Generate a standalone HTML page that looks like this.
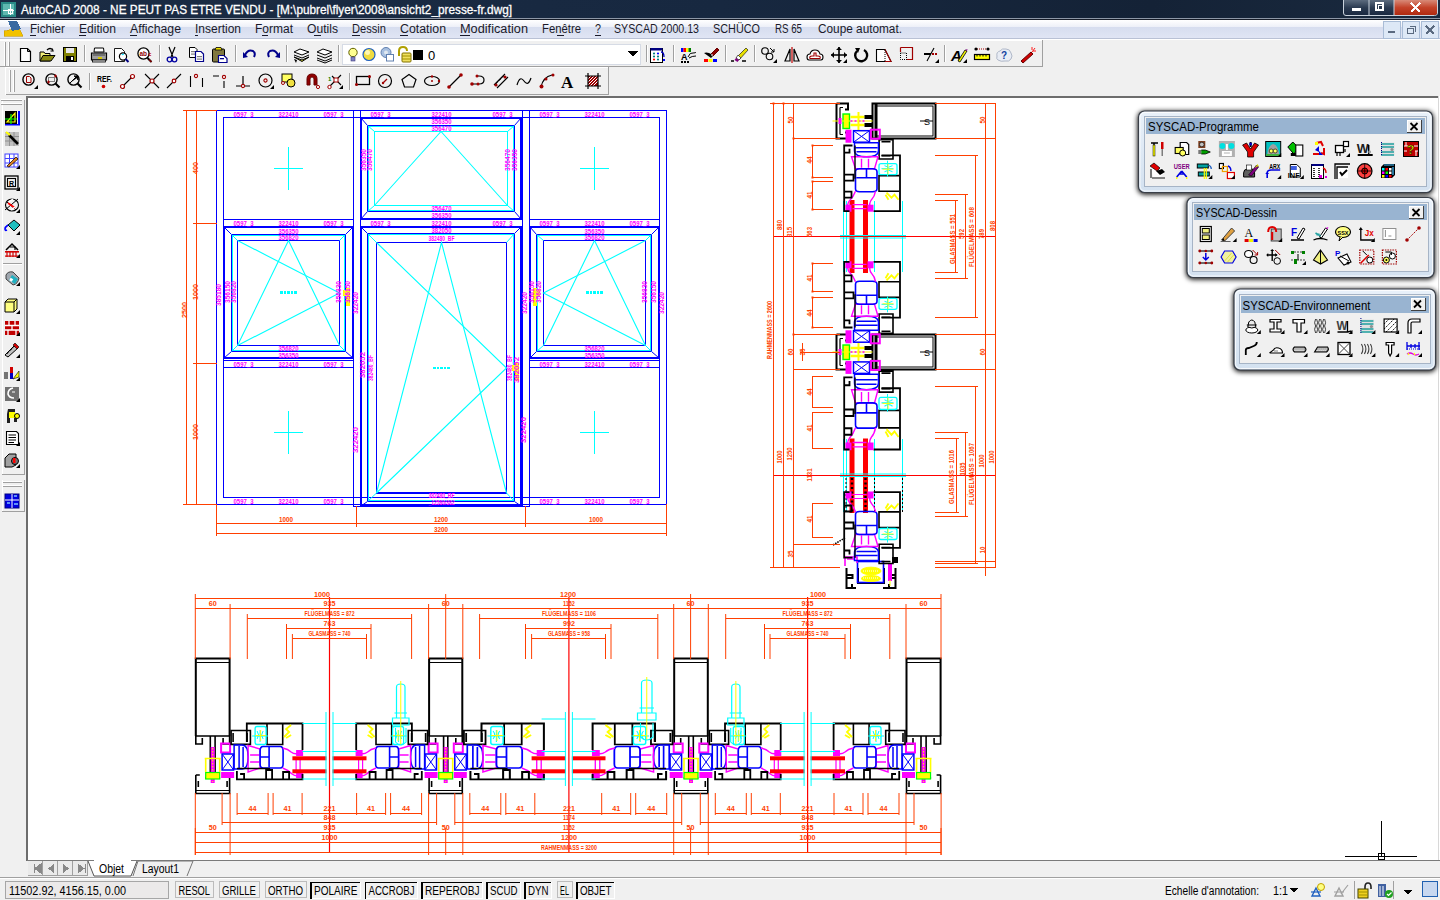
<!DOCTYPE html><html><head><meta charset="utf-8"><style>html,body{margin:0;padding:0;width:1440px;height:900px;overflow:hidden;background:#f0f0f0}svg{position:absolute;left:0;top:0;display:block}text{font-family:"Liberation Sans",sans-serif}</style></head><body>
<svg width="1440" height="900" viewBox="0 0 1440 900" shape-rendering="crispEdges">
<defs>
<linearGradient id="tb" x1="0" y1="0" x2="1" y2="0"><stop offset="0" stop-color="#1b2c44"/><stop offset="0.5" stop-color="#172840"/><stop offset="0.8" stop-color="#142236"/><stop offset="1" stop-color="#1a2a3f"/></linearGradient>
<linearGradient id="mb" x1="0" y1="0" x2="0" y2="1"><stop offset="0" stop-color="#ffffff"/><stop offset="0.38" stop-color="#edf0f8"/><stop offset="0.39" stop-color="#d6ddef"/><stop offset="1" stop-color="#e0e5f4"/></linearGradient>
<linearGradient id="cls" x1="0" y1="0" x2="0" y2="1"><stop offset="0" stop-color="#d88a78"/><stop offset="0.5" stop-color="#c4432a"/><stop offset="1" stop-color="#b02a10"/></linearGradient>
<linearGradient id="tbtn" x1="0" y1="0" x2="0" y2="1"><stop offset="0" stop-color="#5c6b7e"/><stop offset="0.5" stop-color="#2a3a50"/><stop offset="1" stop-color="#1a2840"/></linearGradient>
</defs>
<rect x="0" y="0" width="1440" height="18" fill="url(#tb)" stroke="none" stroke-width="1" />
<line x1="0" y1="18.5" x2="1440" y2="18.5" stroke="#8d97a6" stroke-width="1" />
<line x1="0" y1="19.5" x2="1440" y2="19.5" stroke="#161c28" stroke-width="1" />
<rect x="1" y="2" width="15" height="15" fill="#2a8a86" stroke="none" stroke-width="1" />
<rect x="3" y="4" width="11" height="11" fill="#5fb8b0" stroke="none" stroke-width="1" />
<line x1="3" y1="10" x2="14" y2="10" stroke="#fff" stroke-width="1" />
<line x1="10" y1="4" x2="10" y2="15" stroke="#fff" stroke-width="1" />
<rect x="8" y="9" width="4" height="4" fill="none" stroke="#fff" stroke-width="1" />
<text x="21" y="14" font-size="13" fill="#fff" textLength="491" lengthAdjust="spacingAndGlyphs" stroke="#fff" stroke-width="0.3">AutoCAD 2008 - NE PEUT PAS ETRE VENDU - [M:\pubrel\flyer\2008\ansicht2_presse-fr.dwg]</text>
<g shape-rendering="geometricPrecision">
<path d="M1343.5,0 V13 Q1343.5,15.5 1346,15.5 H1434.5 Q1437.5,15.5 1437.5,13 V0" fill="url(#tbtn)" stroke="#c9d2dc" stroke-width="1"/>
<path d="M1394,0 V15 H1434.5 Q1437,15 1437,12.5 V0 Z" fill="url(#cls)"/>
<line x1="1369" y1="0" x2="1369" y2="15" stroke="#c9d2dc" stroke-width="1" />
<line x1="1394" y1="0" x2="1394" y2="15" stroke="#c9d2dc" stroke-width="1" />
</g>
<rect x="1352" y="8" width="9" height="3" fill="#fff" stroke="none" stroke-width="1" />
<rect x="1376" y="3" width="7" height="7" fill="none" stroke="#fff" stroke-width="1.5" />
<rect x="1378" y="5.5" width="4" height="4" fill="#2a3a50" stroke="#fff" stroke-width="1" />
<path d="M1411,3 L1420,12 M1420,3 L1411,12" stroke="#fff" stroke-width="2.6"/>
<rect x="0" y="20" width="1440" height="18" fill="url(#mb)" stroke="none" stroke-width="1" />
<line x1="0" y1="38.5" x2="1440" y2="38.5" stroke="#b9c1d5" stroke-width="1" />
<line x1="0" y1="39.5" x2="1440" y2="39.5" stroke="#ffffff" stroke-width="1" />
<path d="M4,31 L4,36 L23,36 L19,28 Z" fill="#f2c200" stroke="#c89a00" stroke-width="0.6"/><path d="M8,21 L17,21 L21,29 L12,31 Z" fill="#3a6aa0"/>
<text x="30" y="33" font-size="12.5" fill="#1a1a2a" textLength="35" lengthAdjust="spacingAndGlyphs" >Fichier</text>
<text x="79" y="33" font-size="12.5" fill="#1a1a2a" textLength="37" lengthAdjust="spacingAndGlyphs" >Edition</text>
<text x="130" y="33" font-size="12.5" fill="#1a1a2a" textLength="51" lengthAdjust="spacingAndGlyphs" >Affichage</text>
<text x="195" y="33" font-size="12.5" fill="#1a1a2a" textLength="46" lengthAdjust="spacingAndGlyphs" >Insertion</text>
<text x="255" y="33" font-size="12.5" fill="#1a1a2a" textLength="38" lengthAdjust="spacingAndGlyphs" >Format</text>
<text x="307" y="33" font-size="12.5" fill="#1a1a2a" textLength="31" lengthAdjust="spacingAndGlyphs" >Outils</text>
<text x="352" y="33" font-size="12.5" fill="#1a1a2a" textLength="34" lengthAdjust="spacingAndGlyphs" >Dessin</text>
<text x="400" y="33" font-size="12.5" fill="#1a1a2a" textLength="46" lengthAdjust="spacingAndGlyphs" >Cotation</text>
<text x="460" y="33" font-size="12.5" fill="#1a1a2a" textLength="68" lengthAdjust="spacingAndGlyphs" >Modification</text>
<text x="542" y="33" font-size="12.5" fill="#1a1a2a" textLength="39" lengthAdjust="spacingAndGlyphs" >Fenêtre</text>
<text x="595" y="33" font-size="12.5" fill="#1a1a2a" textLength="6" lengthAdjust="spacingAndGlyphs" >?</text>
<text x="614" y="33" font-size="12.5" fill="#1a1a2a" textLength="85" lengthAdjust="spacingAndGlyphs" >SYSCAD 2000.13</text>
<text x="713" y="33" font-size="12.5" fill="#1a1a2a" textLength="47" lengthAdjust="spacingAndGlyphs" >SCHÜCO</text>
<text x="775" y="33" font-size="12.5" fill="#1a1a2a" textLength="27" lengthAdjust="spacingAndGlyphs" >RS 65</text>
<text x="818" y="33" font-size="12.5" fill="#1a1a2a" textLength="84" lengthAdjust="spacingAndGlyphs" >Coupe automat.</text>
<line x1="30" y1="35.5" x2="36" y2="35.5" stroke="#1a1a2a" stroke-width="1" />
<line x1="79" y1="35.5" x2="86" y2="35.5" stroke="#1a1a2a" stroke-width="1" />
<line x1="130" y1="35.5" x2="137" y2="35.5" stroke="#1a1a2a" stroke-width="1" />
<line x1="195" y1="35.5" x2="198" y2="35.5" stroke="#1a1a2a" stroke-width="1" />
<line x1="262" y1="35.5" x2="268" y2="35.5" stroke="#1a1a2a" stroke-width="1" />
<line x1="314" y1="35.5" x2="321" y2="35.5" stroke="#1a1a2a" stroke-width="1" />
<line x1="352" y1="35.5" x2="360" y2="35.5" stroke="#1a1a2a" stroke-width="1" />
<line x1="400" y1="35.5" x2="408" y2="35.5" stroke="#1a1a2a" stroke-width="1" />
<line x1="460" y1="35.5" x2="470" y2="35.5" stroke="#1a1a2a" stroke-width="1" />
<line x1="557" y1="35.5" x2="564" y2="35.5" stroke="#1a1a2a" stroke-width="1" />
<line x1="595" y1="35.5" x2="601" y2="35.5" stroke="#1a1a2a" stroke-width="1" />
<rect x="1383.5" y="21.5" width="17" height="17" fill="#dde8f6" stroke="#a9bcd6" stroke-width="1" />
<rect x="1402.5" y="21.5" width="17" height="17" fill="#dde8f6" stroke="#a9bcd6" stroke-width="1" />
<rect x="1421.5" y="21.5" width="17" height="17" fill="#dde8f6" stroke="#a9bcd6" stroke-width="1" />
<rect x="1388" y="31" width="7" height="2" fill="#5a6a80" stroke="none" stroke-width="1" />
<path d="M1407.5,28.5 h6 v5 h-6 z M1409.5,26.5 h6 v5" fill="none" stroke="#5a6a80" stroke-width="1.4"/>
<path d="M1426,26 L1434,34 M1434,26 L1426,34" stroke="#5a6a80" stroke-width="2"/>
<rect x="0" y="40" width="1440" height="57" fill="#f0f0f0" stroke="none" stroke-width="1" />
<rect x="0.5" y="40.5" width="1042" height="25" fill="#f0f0f0" stroke="none" stroke-width="1" />
<line x1="0" y1="40.5" x2="1043" y2="40.5" stroke="#ffffff" stroke-width="1" />
<line x1="1042.5" y1="40" x2="1042.5" y2="67" stroke="#a0a0a0" stroke-width="1" />
<line x1="0" y1="66.5" x2="1043" y2="66.5" stroke="#a0a0a0" stroke-width="1" />
<line x1="4.5" y1="42" x2="4.5" y2="66" stroke="#ffffff" stroke-width="1" />
<line x1="5.5" y1="42" x2="5.5" y2="66" stroke="#a0a0a0" stroke-width="1" />
<line x1="8.5" y1="42" x2="8.5" y2="66" stroke="#ffffff" stroke-width="1" />
<line x1="9.5" y1="42" x2="9.5" y2="66" stroke="#a0a0a0" stroke-width="1" />
<line x1="5" y1="67.5" x2="608" y2="67.5" stroke="#ffffff" stroke-width="1" />
<line x1="608.5" y1="67" x2="608.5" y2="95" stroke="#a0a0a0" stroke-width="1" />
<line x1="5" y1="94.5" x2="609" y2="94.5" stroke="#a0a0a0" stroke-width="1" />
<line x1="5.5" y1="67" x2="5.5" y2="95" stroke="#ffffff" stroke-width="1" />
<line x1="9.5" y1="70" x2="9.5" y2="92" stroke="#ffffff" stroke-width="1" />
<line x1="10.5" y1="70" x2="10.5" y2="92" stroke="#a0a0a0" stroke-width="1" />
<line x1="13.5" y1="70" x2="13.5" y2="92" stroke="#ffffff" stroke-width="1" />
<line x1="14.5" y1="70" x2="14.5" y2="92" stroke="#a0a0a0" stroke-width="1" />
<line x1="84.5" y1="45" x2="84.5" y2="62" stroke="#a0a0a0" stroke-width="1" />
<line x1="85.5" y1="45" x2="85.5" y2="62" stroke="#ffffff" stroke-width="1" />
<line x1="159.5" y1="45" x2="159.5" y2="62" stroke="#a0a0a0" stroke-width="1" />
<line x1="160.5" y1="45" x2="160.5" y2="62" stroke="#ffffff" stroke-width="1" />
<line x1="235.5" y1="45" x2="235.5" y2="62" stroke="#a0a0a0" stroke-width="1" />
<line x1="236.5" y1="45" x2="236.5" y2="62" stroke="#ffffff" stroke-width="1" />
<line x1="286.5" y1="45" x2="286.5" y2="62" stroke="#a0a0a0" stroke-width="1" />
<line x1="287.5" y1="45" x2="287.5" y2="62" stroke="#ffffff" stroke-width="1" />
<line x1="338.5" y1="45" x2="338.5" y2="62" stroke="#a0a0a0" stroke-width="1" />
<line x1="339.5" y1="45" x2="339.5" y2="62" stroke="#ffffff" stroke-width="1" />
<line x1="646.5" y1="45" x2="646.5" y2="62" stroke="#a0a0a0" stroke-width="1" />
<line x1="647.5" y1="45" x2="647.5" y2="62" stroke="#ffffff" stroke-width="1" />
<line x1="673.5" y1="45" x2="673.5" y2="62" stroke="#a0a0a0" stroke-width="1" />
<line x1="674.5" y1="45" x2="674.5" y2="62" stroke="#ffffff" stroke-width="1" />
<line x1="725.5" y1="45" x2="725.5" y2="62" stroke="#a0a0a0" stroke-width="1" />
<line x1="726.5" y1="45" x2="726.5" y2="62" stroke="#ffffff" stroke-width="1" />
<line x1="754.5" y1="45" x2="754.5" y2="62" stroke="#a0a0a0" stroke-width="1" />
<line x1="755.5" y1="45" x2="755.5" y2="62" stroke="#ffffff" stroke-width="1" />
<line x1="944.5" y1="45" x2="944.5" y2="62" stroke="#a0a0a0" stroke-width="1" />
<line x1="945.5" y1="45" x2="945.5" y2="62" stroke="#ffffff" stroke-width="1" />
<line x1="89.5" y1="73" x2="89.5" y2="90" stroke="#a0a0a0" stroke-width="1" />
<line x1="90.5" y1="73" x2="90.5" y2="90" stroke="#ffffff" stroke-width="1" />
<line x1="349.5" y1="73" x2="349.5" y2="90" stroke="#a0a0a0" stroke-width="1" />
<line x1="350.5" y1="73" x2="350.5" y2="90" stroke="#ffffff" stroke-width="1" />
<rect x="342.5" y="44.5" width="298" height="20" fill="#ffffff" stroke="#d6dbe5" stroke-width="1" />
<path d="M628,51 h10 l-5,6 z" fill="#000"/>
<text x="428" y="60" font-size="13" fill="#000" >0</text>
<rect x="0" y="97" width="27" height="763" fill="#f0f0f0" stroke="none" stroke-width="1" />
<line x1="2.5" y1="100" x2="2.5" y2="475" stroke="#ffffff" stroke-width="1" />
<line x1="24.5" y1="100" x2="24.5" y2="475" stroke="#a0a0a0" stroke-width="1" />
<line x1="2" y1="474.5" x2="25" y2="474.5" stroke="#a0a0a0" stroke-width="1" />
<line x1="1" y1="99.5" x2="22" y2="99.5" stroke="#ffffff" stroke-width="1" />
<line x1="1" y1="100.5" x2="22" y2="100.5" stroke="#a0a0a0" stroke-width="1" />
<line x1="1" y1="103.5" x2="22" y2="103.5" stroke="#ffffff" stroke-width="1" />
<line x1="1" y1="104.5" x2="22" y2="104.5" stroke="#a0a0a0" stroke-width="1" />
<line x1="3" y1="263.5" x2="22" y2="263.5" stroke="#a0a0a0" stroke-width="1" />
<line x1="3" y1="264.5" x2="22" y2="264.5" stroke="#ffffff" stroke-width="1" />
<line x1="2.5" y1="480" x2="2.5" y2="512" stroke="#ffffff" stroke-width="1" />
<line x1="24.5" y1="480" x2="24.5" y2="512" stroke="#a0a0a0" stroke-width="1" />
<line x1="2" y1="511.5" x2="25" y2="511.5" stroke="#a0a0a0" stroke-width="1" />
<line x1="3" y1="481.5" x2="22" y2="481.5" stroke="#ffffff" stroke-width="1" />
<line x1="3" y1="482.5" x2="22" y2="482.5" stroke="#a0a0a0" stroke-width="1" />
<line x1="3" y1="485.5" x2="22" y2="485.5" stroke="#ffffff" stroke-width="1" />
<line x1="3" y1="486.5" x2="22" y2="486.5" stroke="#a0a0a0" stroke-width="1" />
<rect x="26" y="96" width="1414" height="765" fill="#ffffff" stroke="none" stroke-width="1" />
<rect x="26" y="96" width="1412" height="2" fill="#6d6d6d" stroke="none" stroke-width="1" />
<rect x="26" y="96" width="2" height="765" fill="#6d6d6d" stroke="none" stroke-width="1" />
<line x1="1438.5" y1="96" x2="1438.5" y2="861" stroke="#d8d8d8" stroke-width="1" />
<rect x="27" y="860" width="1413" height="18" fill="#f0f0f0" stroke="none" stroke-width="1" />
<line x1="27" y1="860.5" x2="1440" y2="860.5" stroke="#7a7a7a" stroke-width="1" />
<line x1="0" y1="877.5" x2="1440" y2="877.5" stroke="#a0a0a0" stroke-width="1" />
<line x1="0" y1="878.5" x2="1440" y2="878.5" stroke="#ffffff" stroke-width="1" />
<rect x="28" y="861" width="14" height="14" fill="#eaeaea" stroke="none" stroke-width="1" />
<line x1="42.5" y1="861" x2="42.5" y2="875" stroke="#a0a0a0" stroke-width="1" />
<rect x="43" y="861" width="14" height="14" fill="#eaeaea" stroke="none" stroke-width="1" />
<line x1="57.5" y1="861" x2="57.5" y2="875" stroke="#a0a0a0" stroke-width="1" />
<rect x="58" y="861" width="14" height="14" fill="#eaeaea" stroke="none" stroke-width="1" />
<line x1="72.5" y1="861" x2="72.5" y2="875" stroke="#a0a0a0" stroke-width="1" />
<rect x="73" y="861" width="14" height="14" fill="#eaeaea" stroke="none" stroke-width="1" />
<line x1="87.5" y1="861" x2="87.5" y2="875" stroke="#a0a0a0" stroke-width="1" />
<line x1="28" y1="875.5" x2="88" y2="875.5" stroke="#a0a0a0" stroke-width="1" />
<path d="M34,864 v9 M41,864 v9 l-6,-4.5 z" stroke="#888" fill="#888"/>
<path d="M54,864 v9 l-6,-4.5 z" fill="#888"/><path d="M63,864 v9 l6,-4.5 z" fill="#888"/>
<path d="M78,864 v9 l6,-4.5 z M85.5,864 v9" stroke="#888" fill="#888"/>
<g shape-rendering="geometricPrecision">
<path d="M88,861 L94,876 L131,876 L137,861" fill="#ffffff" stroke="#555" stroke-width="1"/>
<path d="M133,876 L138,861 L193,861 L187,876" fill="#f0f0f0" stroke="#777" stroke-width="1"/>
</g>
<rect x="94" y="860" width="37" height="2" fill="#ffffff" stroke="none" stroke-width="1" />
<text x="99" y="873" font-size="12" fill="#000" textLength="25" lengthAdjust="spacingAndGlyphs" >Objet</text>
<text x="142" y="873" font-size="12" fill="#000" textLength="37" lengthAdjust="spacingAndGlyphs" >Layout1</text>
<rect x="0" y="879" width="1440" height="21" fill="#f0f0f0" stroke="none" stroke-width="1" />
<rect x="5.5" y="881.5" width="163" height="17" fill="#ebe9e9" stroke="#a6a6a6" stroke-width="1" />
<text x="9" y="895" font-size="12" fill="#000" textLength="117" lengthAdjust="spacingAndGlyphs" >11502.92, 4156.15, 0.00</text>
<rect x="175.5" y="881.5" width="37.5" height="16" fill="#f0f0f0" stroke="#bcbcbc" stroke-width="1" />
<text x="178.5" y="894.5" font-size="12" fill="#000" textLength="31.5" lengthAdjust="spacingAndGlyphs" >RESOL</text>
<rect x="219.0" y="881.5" width="40.0" height="16" fill="#f0f0f0" stroke="#bcbcbc" stroke-width="1" />
<text x="222.0" y="894.5" font-size="12" fill="#000" textLength="34.0" lengthAdjust="spacingAndGlyphs" >GRILLE</text>
<rect x="265.0" y="881.5" width="41.0" height="16" fill="#f0f0f0" stroke="#bcbcbc" stroke-width="1" />
<text x="268.0" y="894.5" font-size="12" fill="#000" textLength="35.0" lengthAdjust="spacingAndGlyphs" >ORTHO</text>
<rect x="310.5" y="881.5" width="50.5" height="17" fill="#f0f0f0" stroke="none" stroke-width="1" />
<path d="M311.0,899 V882.5 H361" fill="none" stroke="#000" stroke-width="1.2"/>
<path d="M311.5,898.5 H360.5 V882" fill="none" stroke="#ffffff" stroke-width="1"/>
<text x="314.0" y="894.5" font-size="12" fill="#000" textLength="43.5" lengthAdjust="spacingAndGlyphs" >POLAIRE</text>
<rect x="365" y="881.5" width="53" height="17" fill="#f0f0f0" stroke="none" stroke-width="1" />
<path d="M365.5,899 V882.5 H418" fill="none" stroke="#000" stroke-width="1.2"/>
<path d="M366,898.5 H417.5 V882" fill="none" stroke="#ffffff" stroke-width="1"/>
<text x="368.5" y="894.5" font-size="12" fill="#000" textLength="46" lengthAdjust="spacingAndGlyphs" >ACCROBJ</text>
<rect x="421.5" y="881.5" width="61.5" height="17" fill="#f0f0f0" stroke="none" stroke-width="1" />
<path d="M422.0,899 V882.5 H483" fill="none" stroke="#000" stroke-width="1.2"/>
<path d="M422.5,898.5 H482.5 V882" fill="none" stroke="#ffffff" stroke-width="1"/>
<text x="425.0" y="894.5" font-size="12" fill="#000" textLength="54.5" lengthAdjust="spacingAndGlyphs" >REPEROBJ</text>
<rect x="486.5" y="881.5" width="34.5" height="17" fill="#f0f0f0" stroke="none" stroke-width="1" />
<path d="M487.0,899 V882.5 H521" fill="none" stroke="#000" stroke-width="1.2"/>
<path d="M487.5,898.5 H520.5 V882" fill="none" stroke="#ffffff" stroke-width="1"/>
<text x="490.0" y="894.5" font-size="12" fill="#000" textLength="27.5" lengthAdjust="spacingAndGlyphs" >SCUD</text>
<rect x="524.5" y="881.5" width="27.5" height="17" fill="#f0f0f0" stroke="none" stroke-width="1" />
<path d="M525.0,899 V882.5 H552" fill="none" stroke="#000" stroke-width="1.2"/>
<path d="M525.5,898.5 H551.5 V882" fill="none" stroke="#ffffff" stroke-width="1"/>
<text x="528.0" y="894.5" font-size="12" fill="#000" textLength="20.5" lengthAdjust="spacingAndGlyphs" >DYN</text>
<rect x="557.0" y="881.5" width="15.0" height="16" fill="#f0f0f0" stroke="#bcbcbc" stroke-width="1" />
<text x="560.0" y="894.5" font-size="12" fill="#000" textLength="9.0" lengthAdjust="spacingAndGlyphs" >EL</text>
<rect x="576.5" y="881.5" width="38.5" height="17" fill="#f0f0f0" stroke="none" stroke-width="1" />
<path d="M577.0,899 V882.5 H615" fill="none" stroke="#000" stroke-width="1.2"/>
<path d="M577.5,898.5 H614.5 V882" fill="none" stroke="#ffffff" stroke-width="1"/>
<text x="580.0" y="894.5" font-size="12" fill="#000" textLength="31.5" lengthAdjust="spacingAndGlyphs" >OBJET</text>
<text x="1165" y="895" font-size="12" fill="#000" textLength="94" lengthAdjust="spacingAndGlyphs" >Echelle d'annotation:</text>
<text x="1273" y="895" font-size="12" fill="#000" textLength="15" lengthAdjust="spacingAndGlyphs" >1:1</text>
<path d="M1290,888 h8 l-4,5 z" fill="#000"/>
<path d="M1404,890 h8 l-4,5 z" fill="#000"/>
<rect x="1422.5" y="881.5" width="15" height="15" fill="#c8d8f0" stroke="#2060b0" stroke-width="1.5" />
<line x1="1354.5" y1="881" x2="1354.5" y2="899" stroke="#a0a0a0" stroke-width="1" />
<line x1="1393.5" y1="881" x2="1393.5" y2="899" stroke="#a0a0a0" stroke-width="1" />
<g shape-rendering="crispEdges">
<rect x="216.5" y="110.5" width="450.0" height="394.0" fill="none" stroke="#0000ff" stroke-width="1" />
<rect x="223.5" y="117.5" width="436.0" height="380.0" fill="none" stroke="#0000ff" stroke-width="1" />
<line x1="353.5" y1="110" x2="353.5" y2="507" stroke="#0000ff" stroke-width="1" />
<line x1="360.5" y1="110" x2="360.5" y2="507" stroke="#0000ff" stroke-width="1" />
<line x1="522.5" y1="110" x2="522.5" y2="507" stroke="#0000ff" stroke-width="1" />
<line x1="529.5" y1="110" x2="529.5" y2="507" stroke="#0000ff" stroke-width="1" />
<line x1="353" y1="506.5" x2="361" y2="506.5" stroke="#0000ff" stroke-width="1" />
<line x1="522" y1="506.5" x2="530" y2="506.5" stroke="#0000ff" stroke-width="1" />
<line x1="223.5" y1="219.5" x2="353.5" y2="219.5" stroke="#0000ff" stroke-width="1" />
<line x1="223.5" y1="226.5" x2="353.5" y2="226.5" stroke="#0000ff" stroke-width="1" />
<line x1="223.5" y1="360.5" x2="353.5" y2="360.5" stroke="#0000ff" stroke-width="1" />
<line x1="223.5" y1="367.5" x2="353.5" y2="367.5" stroke="#0000ff" stroke-width="1" />
<line x1="529.5" y1="219.5" x2="659.5" y2="219.5" stroke="#0000ff" stroke-width="1" />
<line x1="529.5" y1="226.5" x2="659.5" y2="226.5" stroke="#0000ff" stroke-width="1" />
<line x1="529.5" y1="360.5" x2="659.5" y2="360.5" stroke="#0000ff" stroke-width="1" />
<line x1="529.5" y1="367.5" x2="659.5" y2="367.5" stroke="#0000ff" stroke-width="1" />
<line x1="360.5" y1="117.5" x2="522.5" y2="117.5" stroke="#0000ff" stroke-width="1" />
<line x1="360.5" y1="219.5" x2="522.5" y2="219.5" stroke="#0000ff" stroke-width="1" />
<line x1="360.5" y1="226.5" x2="522.5" y2="226.5" stroke="#0000ff" stroke-width="1" />
<line x1="274.0" y1="168.5" x2="303.0" y2="168.5" stroke="#00ffff" stroke-width="1.2" />
<line x1="288.5" y1="147.0" x2="288.5" y2="190.0" stroke="#00ffff" stroke-width="1.2" />
<line x1="580.0" y1="168.5" x2="609.0" y2="168.5" stroke="#00ffff" stroke-width="1.2" />
<line x1="594.5" y1="147.0" x2="594.5" y2="190.0" stroke="#00ffff" stroke-width="1.2" />
<line x1="274.0" y1="432.5" x2="303.0" y2="432.5" stroke="#00ffff" stroke-width="1.2" />
<line x1="288.5" y1="411.0" x2="288.5" y2="454.0" stroke="#00ffff" stroke-width="1.2" />
<line x1="580.0" y1="432.5" x2="609.0" y2="432.5" stroke="#00ffff" stroke-width="1.2" />
<line x1="594.5" y1="411.0" x2="594.5" y2="454.0" stroke="#00ffff" stroke-width="1.2" />
<rect x="224" y="227" width="129" height="131" fill="none" stroke="#0000ff" stroke-width="2" />
<rect x="231.5" y="234.5" width="114.0" height="117.0" fill="none" stroke="#0000ff" stroke-width="1" />
<rect x="232.5" y="235.5" width="112.0" height="115.0" fill="none" stroke="#00ffff" stroke-width="1" />
<rect x="237.5" y="240.5" width="102.0" height="105.0" fill="none" stroke="#0000ff" stroke-width="1.3" />
<g shape-rendering="geometricPrecision">
<line x1="224" y1="227" x2="231.5" y2="234.5" stroke="#0000ff" stroke-width="1" />
<line x1="353" y1="227" x2="345.5" y2="234.5" stroke="#0000ff" stroke-width="1" />
<line x1="224" y1="358" x2="231.5" y2="351.5" stroke="#0000ff" stroke-width="1" />
<line x1="353" y1="358" x2="345.5" y2="351.5" stroke="#0000ff" stroke-width="1" />
<line x1="231.5" y1="234.5" x2="237.5" y2="240.5" stroke="#00ffff" stroke-width="1" />
<line x1="345.5" y1="234.5" x2="339.5" y2="240.5" stroke="#00ffff" stroke-width="1" />
<line x1="231.5" y1="351.5" x2="237.5" y2="345.5" stroke="#00ffff" stroke-width="1" />
<line x1="345.5" y1="351.5" x2="339.5" y2="345.5" stroke="#00ffff" stroke-width="1" />
</g>
<rect x="530" y="227" width="129" height="131" fill="none" stroke="#0000ff" stroke-width="2" />
<rect x="536.5" y="234.5" width="115.0" height="117.0" fill="none" stroke="#0000ff" stroke-width="1" />
<rect x="537.5" y="235.5" width="113.0" height="115.0" fill="none" stroke="#00ffff" stroke-width="1" />
<rect x="543.5" y="240.5" width="102.0" height="105.0" fill="none" stroke="#0000ff" stroke-width="1.3" />
<g shape-rendering="geometricPrecision">
<line x1="530" y1="227" x2="536.5" y2="234.5" stroke="#0000ff" stroke-width="1" />
<line x1="659" y1="227" x2="651.5" y2="234.5" stroke="#0000ff" stroke-width="1" />
<line x1="530" y1="358" x2="536.5" y2="351.5" stroke="#0000ff" stroke-width="1" />
<line x1="659" y1="358" x2="651.5" y2="351.5" stroke="#0000ff" stroke-width="1" />
<line x1="536.5" y1="234.5" x2="543.5" y2="240.5" stroke="#00ffff" stroke-width="1" />
<line x1="651.5" y1="234.5" x2="645.5" y2="240.5" stroke="#00ffff" stroke-width="1" />
<line x1="536.5" y1="351.5" x2="543.5" y2="345.5" stroke="#00ffff" stroke-width="1" />
<line x1="651.5" y1="351.5" x2="645.5" y2="345.5" stroke="#00ffff" stroke-width="1" />
</g>
<rect x="361" y="118" width="160" height="101" fill="none" stroke="#0000ff" stroke-width="2" />
<rect x="367.5" y="125.5" width="147.0" height="86.0" fill="none" stroke="#0000ff" stroke-width="1" />
<rect x="368.5" y="126.5" width="145.0" height="84.0" fill="none" stroke="#00ffff" stroke-width="1" />
<rect x="374.5" y="131.5" width="133.0" height="74.0" fill="none" stroke="#00ffff" stroke-width="1.3" />
<g shape-rendering="geometricPrecision">
<line x1="361" y1="118" x2="367.5" y2="125.5" stroke="#0000ff" stroke-width="1" />
<line x1="521" y1="118" x2="514.5" y2="125.5" stroke="#0000ff" stroke-width="1" />
<line x1="361" y1="219" x2="367.5" y2="211.5" stroke="#0000ff" stroke-width="1" />
<line x1="521" y1="219" x2="514.5" y2="211.5" stroke="#0000ff" stroke-width="1" />
<line x1="367.5" y1="125.5" x2="374.5" y2="131.5" stroke="#00ffff" stroke-width="1" />
<line x1="514.5" y1="125.5" x2="507.5" y2="131.5" stroke="#00ffff" stroke-width="1" />
<line x1="367.5" y1="211.5" x2="374.5" y2="205.5" stroke="#00ffff" stroke-width="1" />
<line x1="514.5" y1="211.5" x2="507.5" y2="205.5" stroke="#00ffff" stroke-width="1" />
</g>
<rect x="361" y="227" width="160" height="279" fill="none" stroke="#0000ff" stroke-width="2" />
<rect x="367.5" y="233.5" width="147.0" height="268.0" fill="none" stroke="#0000ff" stroke-width="1" />
<rect x="368.5" y="234.5" width="145.0" height="266.0" fill="none" stroke="#00ffff" stroke-width="1" />
<rect x="376.5" y="242.5" width="130.0" height="250.5" fill="none" stroke="#0000ff" stroke-width="1.3" />
<g shape-rendering="geometricPrecision">
<line x1="361" y1="227" x2="367.5" y2="233.5" stroke="#0000ff" stroke-width="1" />
<line x1="521" y1="227" x2="514.5" y2="233.5" stroke="#0000ff" stroke-width="1" />
<line x1="361" y1="506" x2="367.5" y2="501.5" stroke="#0000ff" stroke-width="1" />
<line x1="521" y1="506" x2="514.5" y2="501.5" stroke="#0000ff" stroke-width="1" />
<line x1="367.5" y1="233.5" x2="376.5" y2="242.5" stroke="#00ffff" stroke-width="1" />
<line x1="514.5" y1="233.5" x2="506.5" y2="242.5" stroke="#00ffff" stroke-width="1" />
<line x1="367.5" y1="501.5" x2="376.5" y2="493" stroke="#00ffff" stroke-width="1" />
<line x1="514.5" y1="501.5" x2="506.5" y2="493" stroke="#00ffff" stroke-width="1" />
</g>
<g shape-rendering="geometricPrecision">
<path d="M237.5,345.5 L288.5,240.5 L339.5,345.5" fill="none" stroke="#00ffff" stroke-width="1.1"/>
<path d="M237.5,240.5 L339.5,293 L237.5,345.5" fill="none" stroke="#00ffff" stroke-width="1.1"/>
<path d="M543.5,345.5 L594.5,240.5 L645.5,345.5" fill="none" stroke="#00ffff" stroke-width="1.1"/>
<path d="M645.5,240.5 L543.5,293 L645.5,345.5" fill="none" stroke="#00ffff" stroke-width="1.1"/>
<path d="M374.5,205.5 L441,131.5 L507.5,205.5" fill="none" stroke="#00ffff" stroke-width="1.1"/>
<path d="M376.5,493 L441.5,242.5 L506.5,493" fill="none" stroke="#00ffff" stroke-width="1.1"/>
<path d="M376.5,242.5 L506.5,368 L376.5,493" fill="none" stroke="#00ffff" stroke-width="1.1"/>
</g>
<rect x="346" y="288" width="4" height="18" fill="#ffff00" stroke="none" stroke-width="1" />
<rect x="343" y="290" width="7" height="6" fill="#ffff00" stroke="none" stroke-width="1" />
<rect x="515" y="363" width="4" height="18" fill="#ffff00" stroke="none" stroke-width="1" />
<rect x="512" y="365" width="7" height="6" fill="#ffff00" stroke="none" stroke-width="1" />
<rect x="533" y="288" width="4" height="18" fill="#ffff00" stroke="none" stroke-width="1" />
<rect x="533" y="290" width="7" height="6" fill="#ffff00" stroke="none" stroke-width="1" />
<path d="M279.5,292.5 h18" stroke="#00ffff" stroke-width="2.2" stroke-dasharray="3,1,2,1"/>
<path d="M585.5,292.5 h18" stroke="#00ffff" stroke-width="2.2" stroke-dasharray="3,1,2,1"/>
<path d="M432.5,368 h18" stroke="#00ffff" stroke-width="2.2" stroke-dasharray="3,1,2,1"/>
<text x="243.5" y="116.5" font-size="7" fill="#ff00ff" textLength="20" lengthAdjust="spacingAndGlyphs" text-anchor="middle" font-weight="bold">0597_3</text>
<text x="288.5" y="116.5" font-size="7" fill="#ff00ff" textLength="20" lengthAdjust="spacingAndGlyphs" text-anchor="middle" font-weight="bold">322410</text>
<text x="333.5" y="116.5" font-size="7" fill="#ff00ff" textLength="20" lengthAdjust="spacingAndGlyphs" text-anchor="middle" font-weight="bold">0597_3</text>
<text x="243.5" y="225.5" font-size="7" fill="#ff00ff" textLength="20" lengthAdjust="spacingAndGlyphs" text-anchor="middle" font-weight="bold">0597_3</text>
<text x="288.5" y="225.5" font-size="7" fill="#ff00ff" textLength="20" lengthAdjust="spacingAndGlyphs" text-anchor="middle" font-weight="bold">322410</text>
<text x="333.5" y="225.5" font-size="7" fill="#ff00ff" textLength="20" lengthAdjust="spacingAndGlyphs" text-anchor="middle" font-weight="bold">0597_3</text>
<text x="549.5" y="116.5" font-size="7" fill="#ff00ff" textLength="20" lengthAdjust="spacingAndGlyphs" text-anchor="middle" font-weight="bold">0597_3</text>
<text x="594.5" y="116.5" font-size="7" fill="#ff00ff" textLength="20" lengthAdjust="spacingAndGlyphs" text-anchor="middle" font-weight="bold">322410</text>
<text x="639.5" y="116.5" font-size="7" fill="#ff00ff" textLength="20" lengthAdjust="spacingAndGlyphs" text-anchor="middle" font-weight="bold">0597_3</text>
<text x="549.5" y="225.5" font-size="7" fill="#ff00ff" textLength="20" lengthAdjust="spacingAndGlyphs" text-anchor="middle" font-weight="bold">0597_3</text>
<text x="594.5" y="225.5" font-size="7" fill="#ff00ff" textLength="20" lengthAdjust="spacingAndGlyphs" text-anchor="middle" font-weight="bold">322410</text>
<text x="639.5" y="225.5" font-size="7" fill="#ff00ff" textLength="20" lengthAdjust="spacingAndGlyphs" text-anchor="middle" font-weight="bold">0597_3</text>
<text x="380.5" y="116.5" font-size="7" fill="#ff00ff" textLength="20" lengthAdjust="spacingAndGlyphs" text-anchor="middle" font-weight="bold">0597_3</text>
<text x="441.5" y="116.5" font-size="7" fill="#ff00ff" textLength="20" lengthAdjust="spacingAndGlyphs" text-anchor="middle" font-weight="bold">322410</text>
<text x="502.5" y="116.5" font-size="7" fill="#ff00ff" textLength="20" lengthAdjust="spacingAndGlyphs" text-anchor="middle" font-weight="bold">0597_3</text>
<text x="380.5" y="225.5" font-size="7" fill="#ff00ff" textLength="20" lengthAdjust="spacingAndGlyphs" text-anchor="middle" font-weight="bold">0597_3</text>
<text x="441.5" y="225.5" font-size="7" fill="#ff00ff" textLength="20" lengthAdjust="spacingAndGlyphs" text-anchor="middle" font-weight="bold">322410</text>
<text x="502.5" y="225.5" font-size="7" fill="#ff00ff" textLength="20" lengthAdjust="spacingAndGlyphs" text-anchor="middle" font-weight="bold">0597_3</text>
<text x="243.5" y="366.5" font-size="7" fill="#ff00ff" textLength="20" lengthAdjust="spacingAndGlyphs" text-anchor="middle" font-weight="bold">0597_3</text>
<text x="288.5" y="366.5" font-size="7" fill="#ff00ff" textLength="20" lengthAdjust="spacingAndGlyphs" text-anchor="middle" font-weight="bold">322410</text>
<text x="333.5" y="366.5" font-size="7" fill="#ff00ff" textLength="20" lengthAdjust="spacingAndGlyphs" text-anchor="middle" font-weight="bold">0597_3</text>
<text x="243.5" y="503.5" font-size="7" fill="#ff00ff" textLength="20" lengthAdjust="spacingAndGlyphs" text-anchor="middle" font-weight="bold">0597_3</text>
<text x="288.5" y="503.5" font-size="7" fill="#ff00ff" textLength="20" lengthAdjust="spacingAndGlyphs" text-anchor="middle" font-weight="bold">322410</text>
<text x="333.5" y="503.5" font-size="7" fill="#ff00ff" textLength="20" lengthAdjust="spacingAndGlyphs" text-anchor="middle" font-weight="bold">0597_3</text>
<text x="288.5" y="233.5" font-size="7" fill="#ff00ff" textLength="20" lengthAdjust="spacingAndGlyphs" text-anchor="middle" font-weight="bold">356350</text>
<text x="288.5" y="239.5" font-size="7" fill="#ff00ff" textLength="20" lengthAdjust="spacingAndGlyphs" text-anchor="middle" font-weight="bold">356820</text>
<text x="288.5" y="350.5" font-size="7" fill="#ff00ff" textLength="20" lengthAdjust="spacingAndGlyphs" text-anchor="middle" font-weight="bold">356820</text>
<text x="288.5" y="357.5" font-size="7" fill="#ff00ff" textLength="20" lengthAdjust="spacingAndGlyphs" text-anchor="middle" font-weight="bold">356350</text>
<text x="549.5" y="366.5" font-size="7" fill="#ff00ff" textLength="20" lengthAdjust="spacingAndGlyphs" text-anchor="middle" font-weight="bold">0597_3</text>
<text x="594.5" y="366.5" font-size="7" fill="#ff00ff" textLength="20" lengthAdjust="spacingAndGlyphs" text-anchor="middle" font-weight="bold">322410</text>
<text x="639.5" y="366.5" font-size="7" fill="#ff00ff" textLength="20" lengthAdjust="spacingAndGlyphs" text-anchor="middle" font-weight="bold">0597_3</text>
<text x="549.5" y="503.5" font-size="7" fill="#ff00ff" textLength="20" lengthAdjust="spacingAndGlyphs" text-anchor="middle" font-weight="bold">0597_3</text>
<text x="594.5" y="503.5" font-size="7" fill="#ff00ff" textLength="20" lengthAdjust="spacingAndGlyphs" text-anchor="middle" font-weight="bold">322410</text>
<text x="639.5" y="503.5" font-size="7" fill="#ff00ff" textLength="20" lengthAdjust="spacingAndGlyphs" text-anchor="middle" font-weight="bold">0597_3</text>
<text x="594.5" y="233.5" font-size="7" fill="#ff00ff" textLength="20" lengthAdjust="spacingAndGlyphs" text-anchor="middle" font-weight="bold">356350</text>
<text x="594.5" y="239.5" font-size="7" fill="#ff00ff" textLength="20" lengthAdjust="spacingAndGlyphs" text-anchor="middle" font-weight="bold">356820</text>
<text x="594.5" y="350.5" font-size="7" fill="#ff00ff" textLength="20" lengthAdjust="spacingAndGlyphs" text-anchor="middle" font-weight="bold">356820</text>
<text x="594.5" y="357.5" font-size="7" fill="#ff00ff" textLength="20" lengthAdjust="spacingAndGlyphs" text-anchor="middle" font-weight="bold">356350</text>
<text x="441.5" y="124" font-size="7" fill="#ff00ff" textLength="20" lengthAdjust="spacingAndGlyphs" text-anchor="middle" font-weight="bold">356350</text>
<text x="441.5" y="130.5" font-size="7" fill="#ff00ff" textLength="20" lengthAdjust="spacingAndGlyphs" text-anchor="middle" font-weight="bold">356470</text>
<text x="441.5" y="210.5" font-size="7" fill="#ff00ff" textLength="20" lengthAdjust="spacingAndGlyphs" text-anchor="middle" font-weight="bold">356470</text>
<text x="441.5" y="218" font-size="7" fill="#ff00ff" textLength="20" lengthAdjust="spacingAndGlyphs" text-anchor="middle" font-weight="bold">356350</text>
<text x="441.5" y="233" font-size="7" fill="#ff00ff" textLength="20" lengthAdjust="spacingAndGlyphs" text-anchor="middle" font-weight="bold">382050</text>
<text x="441.5" y="240.5" font-size="7" fill="#ff00ff" textLength="26" lengthAdjust="spacingAndGlyphs" text-anchor="middle" font-weight="bold">382480_BF</text>
<text x="441.5" y="498" font-size="7" fill="#ff00ff" textLength="26" lengthAdjust="spacingAndGlyphs" text-anchor="middle" font-weight="bold">382480_BF</text>
<text x="441.5" y="505" font-size="7" fill="#ff00ff" textLength="26" lengthAdjust="spacingAndGlyphs" text-anchor="middle" font-weight="bold">_12580/382</text>
<text transform="translate(221,295) rotate(-90)" x="0" y="0" font-size="7" fill="#ff00ff" textLength="22" lengthAdjust="spacingAndGlyphs" text-anchor="middle" font-weight="bold">385180</text>
<text transform="translate(230,292) rotate(-90)" x="0" y="0" font-size="7" fill="#ff00ff" textLength="22" lengthAdjust="spacingAndGlyphs" text-anchor="middle" font-weight="bold">356150</text>
<text transform="translate(236,292) rotate(-90)" x="0" y="0" font-size="7" fill="#ff00ff" textLength="22" lengthAdjust="spacingAndGlyphs" text-anchor="middle" font-weight="bold">356820</text>
<text transform="translate(341,292) rotate(-90)" x="0" y="0" font-size="7" fill="#ff00ff" textLength="22" lengthAdjust="spacingAndGlyphs" text-anchor="middle" font-weight="bold">356830</text>
<text transform="translate(350,292) rotate(-90)" x="0" y="0" font-size="7" fill="#ff00ff" textLength="22" lengthAdjust="spacingAndGlyphs" text-anchor="middle" font-weight="bold">356150</text>
<text transform="translate(358,303) rotate(-90)" x="0" y="0" font-size="7" fill="#ff00ff" textLength="22" lengthAdjust="spacingAndGlyphs" text-anchor="middle" font-weight="bold">322420</text>
<text transform="translate(527,303) rotate(-90)" x="0" y="0" font-size="7" fill="#ff00ff" textLength="22" lengthAdjust="spacingAndGlyphs" text-anchor="middle" font-weight="bold">322420</text>
<text transform="translate(534,292) rotate(-90)" x="0" y="0" font-size="7" fill="#ff00ff" textLength="22" lengthAdjust="spacingAndGlyphs" text-anchor="middle" font-weight="bold">356150</text>
<text transform="translate(541,292) rotate(-90)" x="0" y="0" font-size="7" fill="#ff00ff" textLength="22" lengthAdjust="spacingAndGlyphs" text-anchor="middle" font-weight="bold">356820</text>
<text transform="translate(647,292) rotate(-90)" x="0" y="0" font-size="7" fill="#ff00ff" textLength="22" lengthAdjust="spacingAndGlyphs" text-anchor="middle" font-weight="bold">356830</text>
<text transform="translate(656,292) rotate(-90)" x="0" y="0" font-size="7" fill="#ff00ff" textLength="22" lengthAdjust="spacingAndGlyphs" text-anchor="middle" font-weight="bold">356150</text>
<text transform="translate(664,303) rotate(-90)" x="0" y="0" font-size="7" fill="#ff00ff" textLength="22" lengthAdjust="spacingAndGlyphs" text-anchor="middle" font-weight="bold">322420</text>
<text transform="translate(366,160) rotate(-90)" x="0" y="0" font-size="7" fill="#ff00ff" textLength="22" lengthAdjust="spacingAndGlyphs" text-anchor="middle" font-weight="bold">356350</text>
<text transform="translate(372,160) rotate(-90)" x="0" y="0" font-size="7" fill="#ff00ff" textLength="22" lengthAdjust="spacingAndGlyphs" text-anchor="middle" font-weight="bold">356470</text>
<text transform="translate(510,160) rotate(-90)" x="0" y="0" font-size="7" fill="#ff00ff" textLength="22" lengthAdjust="spacingAndGlyphs" text-anchor="middle" font-weight="bold">356470</text>
<text transform="translate(517,160) rotate(-90)" x="0" y="0" font-size="7" fill="#ff00ff" textLength="22" lengthAdjust="spacingAndGlyphs" text-anchor="middle" font-weight="bold">356350</text>
<text transform="translate(365,365) rotate(-90)" x="0" y="0" font-size="7" fill="#ff00ff" textLength="26" lengthAdjust="spacingAndGlyphs" text-anchor="middle" font-weight="bold">382052</text>
<text transform="translate(373,368) rotate(-90)" x="0" y="0" font-size="7" fill="#ff00ff" textLength="26" lengthAdjust="spacingAndGlyphs" text-anchor="middle" font-weight="bold">382480_BF</text>
<text transform="translate(512,368) rotate(-90)" x="0" y="0" font-size="7" fill="#ff00ff" textLength="26" lengthAdjust="spacingAndGlyphs" text-anchor="middle" font-weight="bold">382480_BF</text>
<text transform="translate(519,370) rotate(-90)" x="0" y="0" font-size="7" fill="#ff00ff" textLength="26" lengthAdjust="spacingAndGlyphs" text-anchor="middle" font-weight="bold">382052</text>
<text transform="translate(358,440) rotate(-90)" x="0" y="0" font-size="7" fill="#ff00ff" textLength="26" lengthAdjust="spacingAndGlyphs" text-anchor="middle" font-weight="bold">322420</text>
<text transform="translate(526,430) rotate(-90)" x="0" y="0" font-size="7" fill="#ff00ff" textLength="26" lengthAdjust="spacingAndGlyphs" text-anchor="middle" font-weight="bold">322420</text>
<line x1="186.5" y1="110" x2="186.5" y2="504.5" stroke="#ff3f00" stroke-width="1" />
<line x1="196.5" y1="110" x2="196.5" y2="504.5" stroke="#ff3f00" stroke-width="1" />
<line x1="183" y1="110.5" x2="216.5" y2="110.5" stroke="#ff3f00" stroke-width="1" />
<line x1="183" y1="504.5" x2="216.5" y2="504.5" stroke="#ff3f00" stroke-width="1" />
<line x1="193" y1="223.5" x2="216.5" y2="223.5" stroke="#ff3f00" stroke-width="1" />
<line x1="193" y1="363.5" x2="216.5" y2="363.5" stroke="#ff3f00" stroke-width="1" />
<line x1="195" y1="110.5" x2="199" y2="110.5" stroke="#ff3f00" stroke-width="1.5" />
<line x1="195" y1="223.5" x2="199" y2="223.5" stroke="#ff3f00" stroke-width="1.5" />
<line x1="195" y1="363.5" x2="199" y2="363.5" stroke="#ff3f00" stroke-width="1.5" />
<line x1="195" y1="504.5" x2="199" y2="504.5" stroke="#ff3f00" stroke-width="1.5" />
<text transform="translate(187,310) rotate(-90)" font-size="8" fill="#ff3f00" font-weight="bold" textLength="16" lengthAdjust="spacingAndGlyphs" text-anchor="middle">2500</text>
<text transform="translate(198,168) rotate(-90)" font-size="8" fill="#ff3f00" font-weight="bold" textLength="12" lengthAdjust="spacingAndGlyphs" text-anchor="middle">400</text>
<text transform="translate(198,292) rotate(-90)" font-size="8" fill="#ff3f00" font-weight="bold" textLength="16" lengthAdjust="spacingAndGlyphs" text-anchor="middle">1000</text>
<text transform="translate(198,432) rotate(-90)" font-size="8" fill="#ff3f00" font-weight="bold" textLength="16" lengthAdjust="spacingAndGlyphs" text-anchor="middle">1000</text>
<line x1="216.5" y1="523.5" x2="666.5" y2="523.5" stroke="#ff3f00" stroke-width="1" />
<line x1="216.5" y1="533.5" x2="666.5" y2="533.5" stroke="#ff3f00" stroke-width="1" />
<line x1="216.5" y1="504" x2="216.5" y2="536" stroke="#ff3f00" stroke-width="1" />
<line x1="666.5" y1="504" x2="666.5" y2="536" stroke="#ff3f00" stroke-width="1" />
<line x1="356.5" y1="506" x2="356.5" y2="527" stroke="#ff3f00" stroke-width="1" />
<line x1="525.5" y1="506" x2="525.5" y2="527" stroke="#ff3f00" stroke-width="1" />
<text x="286" y="522" font-size="8" fill="#ff3f00" font-weight="bold" textLength="14" lengthAdjust="spacingAndGlyphs" text-anchor="middle">1000</text>
<text x="441" y="522" font-size="8" fill="#ff3f00" font-weight="bold" textLength="14" lengthAdjust="spacingAndGlyphs" text-anchor="middle">1200</text>
<text x="596" y="522" font-size="8" fill="#ff3f00" font-weight="bold" textLength="14" lengthAdjust="spacingAndGlyphs" text-anchor="middle">1000</text>
<text x="441" y="532" font-size="8" fill="#ff3f00" font-weight="bold" textLength="14" lengthAdjust="spacingAndGlyphs" text-anchor="middle">3200</text>
</g>
<defs><g id="prof"><path d="M6.6,8 L6.6,0 L70.6,0 M31,0 v8 M41,0 v8 M43.3,0 v13 M16.6,59 L70.6,59 M70.6,30 L70.6,59" stroke="#000000" stroke-width="2" fill="none"/><rect x="1.3" y="39" width="18.0" height="12.700000000000003" stroke="#000000" stroke-width="1.6" fill="none"/><rect x="36.6" y="44.4" width="13.399999999999999" height="14.600000000000001" stroke="#000000" stroke-width="1.6" fill="none"/><line x1="16.6" y1="36.4" x2="51" y2="36.4" stroke="#000000" stroke-width="1.4"/><line x1="16.6" y1="51.7" x2="16.6" y2="59" stroke="#000000" stroke-width="1.6"/><path d="M22,6 h6 M22,3 v6 M48,36 h6 v4 M60,40 v8 h-6" stroke="#000000" stroke-width="1.2" fill="none"/><rect x="-8.3" y="7.7" width="12.3" height="20.0" stroke="#0000ff" stroke-width="1.6" fill="none"/><path d="M-8.3,7.7 L4,27.7 M4,7.7 L-8.3,27.7" stroke="#0000ff" stroke-width="1" fill="none"/><rect x="5.3" y="12.4" width="10.7" height="24.0" stroke="#0000ff" stroke-width="1.6" fill="none"/><line x1="7.5" y1="12.4" x2="7.5" y2="36.4" stroke="#0000ff" stroke-width="1"/><rect x="29.3" y="9.7" width="23.999999999999996" height="27.000000000000004" stroke="#0000ff" stroke-width="1.6" fill="none"/><path d="M30,16.7 h8 M30,21.7 h8 M30,27.7 h8" stroke="#0000ff" stroke-width="1.2" fill="none"/><path d="M59.3,1.7 L51.3,9.7 L51.3,44.7" stroke="#0000ff" stroke-width="1.6" fill="none"/><path d="M57,10 L57,44 M60,12 v4 M60,22 v4 M60,32 v4" stroke="#0000ff" stroke-width="1.4" fill="none"/><path d="M17.3,6.7 L17.3,36.7 L33.3,30 L33.3,12 Z" stroke="#ff00ff" stroke-width="1.4" fill="none"/><path d="M22,14 h6 v8 h-6 M22,26 h6" stroke="#ff00ff" stroke-width="1.2" fill="none"/><rect x="61" y="2" width="10" height="9" stroke="#ff00ff" stroke-width="1.3" fill="none"/><rect x="61" y="18" width="10" height="10" stroke="#ff00ff" stroke-width="1.3" fill="none"/><rect x="-6" y="-2" width="6" height="6" stroke="#ff00ff" stroke-width="1" fill="#ff00ff"/><rect x="-6" y="29" width="6" height="6" stroke="#ff00ff" stroke-width="1" fill="#ff00ff"/><rect x="16" y="55" width="6" height="4" stroke="#ff00ff" stroke-width="1" fill="#ff00ff"/><path d="M51,48 L59,54 M53,56 l4,-6" stroke="#ffff00" stroke-width="1.8" fill="none"/></g>
</defs>
<g shape-rendering="geometricPrecision">
<rect x="872.5" y="103.5" width="63.0" height="35.0" fill="none" stroke="#000000" stroke-width="2" />
<rect x="875.5" y="106.0" width="57.5" height="30.0" fill="none" stroke="#000000" stroke-width="1" />
<path d="M836.5,103.5 H848 V109.5 H845 M848,138.5 V132.5 H845 M836.5,103.5 V138.5 H848" stroke="#000000" stroke-width="2" fill="none"/>
<path d="M840.0,107.5 V134.5 M840.0,107.5 h3 M840.0,134.5 h3" stroke="#000000" stroke-width="1.2" fill="none"/>
<rect x="843.0" y="114.0" width="6.5" height="14.5" fill="#ffff00" stroke="#00ff00" stroke-width="1.4" />
<path d="M832.5,121.0 H872.5" stroke="#ffff00" stroke-width="1.2"/>
<path d="M850.5,117.0 h14 M850.5,125.0 h14" stroke="#ffff00" stroke-width="2.4"/>
<path d="M850.5,121.0 h14" stroke="#ff00ff" stroke-width="1.6" stroke-dasharray="2,2"/>
<path d="M858.5,112.0 v18" stroke="#ffff00" stroke-width="2"/>
<path d="M838.5,118.0 h3 v6 h-3 z" fill="#ff00ff"/>
<path d="M864.5,123.0 h8 v4 h-8 z M864.5,115.0 h8 v4 h-8 z" fill="#000000"/>
<path d="M876,103.5 V138.5" stroke="#000000" stroke-width="3"/>
<text x="927" y="125.0" font-size="9" fill="#000000" text-anchor="middle">S</text>
<line x1="920" y1="121.0" x2="933" y2="121.0" stroke="#000000" stroke-width="1" />
<rect x="872.5" y="334.5" width="63.0" height="35.0" fill="none" stroke="#000000" stroke-width="2" />
<rect x="875.5" y="337.0" width="57.5" height="30.0" fill="none" stroke="#000000" stroke-width="1" />
<path d="M836.5,334.5 H848 V340.5 H845 M848,369.5 V363.5 H845 M836.5,334.5 V369.5 H848" stroke="#000000" stroke-width="2" fill="none"/>
<path d="M840.0,338.5 V365.5 M840.0,338.5 h3 M840.0,365.5 h3" stroke="#000000" stroke-width="1.2" fill="none"/>
<rect x="843.0" y="345.0" width="6.5" height="14.5" fill="#ffff00" stroke="#00ff00" stroke-width="1.4" />
<path d="M832.5,352.0 H872.5" stroke="#ffff00" stroke-width="1.2"/>
<path d="M850.5,348.0 h14 M850.5,356.0 h14" stroke="#ffff00" stroke-width="2.4"/>
<path d="M850.5,352.0 h14" stroke="#ff00ff" stroke-width="1.6" stroke-dasharray="2,2"/>
<path d="M858.5,343.0 v18" stroke="#ffff00" stroke-width="2"/>
<path d="M838.5,349.0 h3 v6 h-3 z" fill="#ff00ff"/>
<path d="M864.5,354.0 h8 v4 h-8 z M864.5,346.0 h8 v4 h-8 z" fill="#000000"/>
<path d="M876,334.5 V369.5" stroke="#000000" stroke-width="3"/>
<text x="927" y="356.0" font-size="9" fill="#000000" text-anchor="middle">S</text>
<line x1="920" y1="352.0" x2="933" y2="352.0" stroke="#000000" stroke-width="1" />
<line x1="843.5" y1="201" x2="843.5" y2="272" stroke="#00ffff" stroke-width="1" />
<line x1="874.5" y1="201" x2="874.5" y2="272" stroke="#00ffff" stroke-width="1" />
<line x1="902.5" y1="201" x2="902.5" y2="272" stroke="#00ffff" stroke-width="1" />
<line x1="846.5" y1="201" x2="846.5" y2="272" stroke="#00ffff" stroke-width="1" />
<rect x="849.5" y="200" width="5" height="73" fill="#ff0000" stroke="none" stroke-width="1" />
<rect x="863" y="200" width="5" height="73" fill="#ff0000" stroke="none" stroke-width="1" />
<line x1="840" y1="235.5" x2="906" y2="235.5" stroke="#00ffff" stroke-width="1" />
<line x1="840" y1="238" x2="906" y2="238" stroke="#00ffff" stroke-width="1" />
<line x1="843.5" y1="439" x2="843.5" y2="512" stroke="#00ffff" stroke-width="1" />
<line x1="874.5" y1="439" x2="874.5" y2="512" stroke="#00ffff" stroke-width="1" />
<line x1="902.5" y1="439" x2="902.5" y2="512" stroke="#00ffff" stroke-width="1" />
<line x1="846.5" y1="439" x2="846.5" y2="512" stroke="#00ffff" stroke-width="1" />
<rect x="849.5" y="438.5" width="5" height="37" fill="#ff0000" stroke="none" stroke-width="1" />
<rect x="863" y="438.5" width="5" height="37" fill="#ff0000" stroke="none" stroke-width="1" />
<rect x="849.5" y="477" width="5" height="36" fill="#ff0000" stroke="none" stroke-width="1" />
<rect x="863" y="477" width="5" height="36" fill="#ff0000" stroke="none" stroke-width="1" />
<path d="M852,478 V512 M865.5,478 V512" stroke="#000000" stroke-width="2.4" stroke-dasharray="2,2.5"/>
<line x1="840" y1="474" x2="906" y2="474" stroke="#00ffff" stroke-width="1" />
<line x1="840" y1="476.5" x2="906" y2="476.5" stroke="#00ffff" stroke-width="1" />
<path d="M846,478 V512 M874.5,478 V512 M902.5,478 V512" stroke="#000000" stroke-width="1" stroke-dasharray="2,2"/>
<path d="M846.5,568 V588 H856 M852,588 v-4 M846.5,575 h6 v3 h-6 M895.5,568 V588 H883 M889,588 v-4 M895.5,575 h-6 v3 h6 M858,568 V583 H884 V568" stroke="#000000" stroke-width="2" fill="none"/>
<rect x="857.5" y="561.5" width="26" height="21" fill="none" stroke="#0000ff" stroke-width="1.6"/>
<ellipse cx="871" cy="571" rx="10" ry="3.8" fill="#ffff00" stroke="#ffff00"/><ellipse cx="871" cy="578.5" rx="10" ry="3.6" fill="#ffff00"/>
<path d="M863,571 h16 M863,578 h16" stroke="#fff" stroke-width="1" stroke-dasharray="1,1"/>
<rect x="888" y="563" width="4" height="18" fill="#ff00ff" stroke="none" stroke-width="1" />
<path d="M890,580 v6" stroke="#ffff00" stroke-width="1"/>
<path d="M845,566 V557 H857 V563 M847,559 h8" stroke="#ff00ff" stroke-width="1.6" fill="none"/>
<path d="M833,545 L845,538" stroke="#000000" stroke-width="1.5" stroke-dasharray="1.5,1"/>
<rect x="892" y="557" width="6" height="6" fill="#000000" stroke="none" stroke-width="1" />
<line x1="773" y1="236.5" x2="996" y2="236.5" stroke="#ff0000" stroke-width="1.2" />
<line x1="773" y1="475.5" x2="996" y2="475.5" stroke="#ff0000" stroke-width="1.2" />
<line x1="773.5" y1="103" x2="773.5" y2="567" stroke="#ff3f00" stroke-width="1" />
<line x1="783.5" y1="103" x2="783.5" y2="567" stroke="#ff3f00" stroke-width="1" />
<line x1="793.5" y1="103" x2="793.5" y2="567" stroke="#ff3f00" stroke-width="1" />
<line x1="770" y1="103.5" x2="840" y2="103.5" stroke="#ff3f00" stroke-width="1" />
<line x1="770" y1="567.5" x2="840" y2="567.5" stroke="#ff3f00" stroke-width="1" />
<line x1="793" y1="138.5" x2="840" y2="138.5" stroke="#ff3f00" stroke-width="1" />
<line x1="793" y1="334.5" x2="840" y2="334.5" stroke="#ff3f00" stroke-width="1" />
<line x1="793" y1="369.5" x2="840" y2="369.5" stroke="#ff3f00" stroke-width="1" />
<line x1="793" y1="544.5" x2="840" y2="544.5" stroke="#ff3f00" stroke-width="1" />
<line x1="800" y1="352.5" x2="840" y2="352.5" stroke="#ff3f00" stroke-width="1" />
<line x1="802.5" y1="343" x2="802.5" y2="361" stroke="#ff3f00" stroke-width="1" />
<line x1="812.5" y1="145.5" x2="812.5" y2="177.5" stroke="#ff3f00" stroke-width="1" />
<line x1="812" y1="145.5" x2="833" y2="145.5" stroke="#ff3f00" stroke-width="1" />
<line x1="812" y1="177.5" x2="833" y2="177.5" stroke="#ff3f00" stroke-width="1" />
<line x1="812.5" y1="181.5" x2="812.5" y2="209.5" stroke="#ff3f00" stroke-width="1" />
<line x1="812" y1="181.5" x2="833" y2="181.5" stroke="#ff3f00" stroke-width="1" />
<line x1="812" y1="209.5" x2="833" y2="209.5" stroke="#ff3f00" stroke-width="1" />
<line x1="812.5" y1="263.5" x2="812.5" y2="291.5" stroke="#ff3f00" stroke-width="1" />
<line x1="812" y1="263.5" x2="833" y2="263.5" stroke="#ff3f00" stroke-width="1" />
<line x1="812" y1="291.5" x2="833" y2="291.5" stroke="#ff3f00" stroke-width="1" />
<line x1="812.5" y1="297.5" x2="812.5" y2="327.5" stroke="#ff3f00" stroke-width="1" />
<line x1="812" y1="297.5" x2="833" y2="297.5" stroke="#ff3f00" stroke-width="1" />
<line x1="812" y1="327.5" x2="833" y2="327.5" stroke="#ff3f00" stroke-width="1" />
<line x1="812.5" y1="376.5" x2="812.5" y2="407.5" stroke="#ff3f00" stroke-width="1" />
<line x1="812" y1="376.5" x2="833" y2="376.5" stroke="#ff3f00" stroke-width="1" />
<line x1="812" y1="407.5" x2="833" y2="407.5" stroke="#ff3f00" stroke-width="1" />
<line x1="812.5" y1="412.5" x2="812.5" y2="448.5" stroke="#ff3f00" stroke-width="1" />
<line x1="812" y1="412.5" x2="833" y2="412.5" stroke="#ff3f00" stroke-width="1" />
<line x1="812" y1="448.5" x2="833" y2="448.5" stroke="#ff3f00" stroke-width="1" />
<line x1="812.5" y1="503.5" x2="812.5" y2="537.5" stroke="#ff3f00" stroke-width="1" />
<line x1="812" y1="503.5" x2="833" y2="503.5" stroke="#ff3f00" stroke-width="1" />
<line x1="812" y1="537.5" x2="833" y2="537.5" stroke="#ff3f00" stroke-width="1" />
<rect x="772.5" y="102.5" width="2" height="2" fill="#ff3f00" stroke="none" stroke-width="1" />
<rect x="782.5" y="102.5" width="2" height="2" fill="#ff3f00" stroke="none" stroke-width="1" />
<rect x="792.5" y="137.5" width="2" height="2" fill="#ff3f00" stroke="none" stroke-width="1" />
<rect x="811.5" y="144.5" width="2" height="2" fill="#ff3f00" stroke="none" stroke-width="1" />
<rect x="811.5" y="176.5" width="2" height="2" fill="#ff3f00" stroke="none" stroke-width="1" />
<rect x="811.5" y="180.5" width="2" height="2" fill="#ff3f00" stroke="none" stroke-width="1" />
<rect x="811.5" y="208.5" width="2" height="2" fill="#ff3f00" stroke="none" stroke-width="1" />
<rect x="811.5" y="262.5" width="2" height="2" fill="#ff3f00" stroke="none" stroke-width="1" />
<rect x="811.5" y="290.5" width="2" height="2" fill="#ff3f00" stroke="none" stroke-width="1" />
<rect x="811.5" y="296.5" width="2" height="2" fill="#ff3f00" stroke="none" stroke-width="1" />
<rect x="811.5" y="326.5" width="2" height="2" fill="#ff3f00" stroke="none" stroke-width="1" />
<rect x="792.5" y="333.5" width="2" height="2" fill="#ff3f00" stroke="none" stroke-width="1" />
<line x1="985.5" y1="103" x2="985.5" y2="567" stroke="#ff3f00" stroke-width="1" />
<line x1="995.5" y1="103" x2="995.5" y2="567" stroke="#ff3f00" stroke-width="1" />
<line x1="985.5" y1="560" x2="985.5" y2="576" stroke="#ff3f00" stroke-width="1" />
<line x1="935" y1="103.5" x2="996" y2="103.5" stroke="#ff3f00" stroke-width="1" />
<line x1="935" y1="138.5" x2="996" y2="138.5" stroke="#ff3f00" stroke-width="1" />
<line x1="935" y1="334.5" x2="996" y2="334.5" stroke="#ff3f00" stroke-width="1" />
<line x1="935" y1="369.5" x2="996" y2="369.5" stroke="#ff3f00" stroke-width="1" />
<line x1="935" y1="561.5" x2="996" y2="561.5" stroke="#ff3f00" stroke-width="1" />
<line x1="935" y1="567.5" x2="996" y2="567.5" stroke="#ff3f00" stroke-width="1" />
<line x1="955.5" y1="200" x2="955.5" y2="273" stroke="#ff3f00" stroke-width="1" />
<line x1="965.5" y1="194" x2="965.5" y2="278" stroke="#ff3f00" stroke-width="1" />
<line x1="975.5" y1="155" x2="975.5" y2="317" stroke="#ff3f00" stroke-width="1" />
<line x1="935" y1="200.5" x2="958" y2="200.5" stroke="#ff3f00" stroke-width="1" />
<line x1="935" y1="272.5" x2="958" y2="272.5" stroke="#ff3f00" stroke-width="1" />
<line x1="935" y1="194.5" x2="968" y2="194.5" stroke="#ff3f00" stroke-width="1" />
<line x1="935" y1="278.5" x2="968" y2="278.5" stroke="#ff3f00" stroke-width="1" />
<line x1="935" y1="155.5" x2="978" y2="155.5" stroke="#ff3f00" stroke-width="1" />
<line x1="935" y1="317.5" x2="978" y2="317.5" stroke="#ff3f00" stroke-width="1" />
<line x1="956.5" y1="438" x2="956.5" y2="513" stroke="#ff3f00" stroke-width="1" />
<line x1="965.5" y1="432" x2="965.5" y2="516" stroke="#ff3f00" stroke-width="1" />
<line x1="975.5" y1="386" x2="975.5" y2="563" stroke="#ff3f00" stroke-width="1" />
<line x1="935" y1="438.5" x2="959" y2="438.5" stroke="#ff3f00" stroke-width="1" />
<line x1="935" y1="512.5" x2="959" y2="512.5" stroke="#ff3f00" stroke-width="1" />
<line x1="935" y1="432.5" x2="968" y2="432.5" stroke="#ff3f00" stroke-width="1" />
<line x1="935" y1="516.5" x2="968" y2="516.5" stroke="#ff3f00" stroke-width="1" />
<line x1="935" y1="386.5" x2="978" y2="386.5" stroke="#ff3f00" stroke-width="1" />
<line x1="935" y1="563.5" x2="978" y2="563.5" stroke="#ff3f00" stroke-width="1" />
<text transform="translate(793,120) rotate(-90)" font-size="7" fill="#ff3f00" font-weight="bold" textLength="7" lengthAdjust="spacingAndGlyphs" text-anchor="middle">50</text>
<text transform="translate(812,160) rotate(-90)" font-size="7" fill="#ff3f00" font-weight="bold" textLength="7" lengthAdjust="spacingAndGlyphs" text-anchor="middle">44</text>
<text transform="translate(812,195) rotate(-90)" font-size="7" fill="#ff3f00" font-weight="bold" textLength="7" lengthAdjust="spacingAndGlyphs" text-anchor="middle">41</text>
<text transform="translate(782,225) rotate(-90)" font-size="7" fill="#ff3f00" font-weight="bold" textLength="10" lengthAdjust="spacingAndGlyphs" text-anchor="middle">880</text>
<text transform="translate(792,232) rotate(-90)" font-size="7" fill="#ff3f00" font-weight="bold" textLength="10" lengthAdjust="spacingAndGlyphs" text-anchor="middle">315</text>
<text transform="translate(812,232) rotate(-90)" font-size="7" fill="#ff3f00" font-weight="bold" textLength="10" lengthAdjust="spacingAndGlyphs" text-anchor="middle">563</text>
<text transform="translate(812,278) rotate(-90)" font-size="7" fill="#ff3f00" font-weight="bold" textLength="7" lengthAdjust="spacingAndGlyphs" text-anchor="middle">41</text>
<text transform="translate(812,313) rotate(-90)" font-size="7" fill="#ff3f00" font-weight="bold" textLength="7" lengthAdjust="spacingAndGlyphs" text-anchor="middle">44</text>
<text transform="translate(772,330) rotate(-90)" font-size="7" fill="#ff3f00" font-weight="bold" textLength="58" lengthAdjust="spacingAndGlyphs" text-anchor="middle">RAHMENMASS = 2600</text>
<text transform="translate(793,352) rotate(-90)" font-size="7" fill="#ff3f00" font-weight="bold" textLength="7" lengthAdjust="spacingAndGlyphs" text-anchor="middle">60</text>
<text transform="translate(805,352) rotate(-90)" font-size="7" fill="#ff3f00" font-weight="bold" textLength="7" lengthAdjust="spacingAndGlyphs" text-anchor="middle">35</text>
<text transform="translate(812,392) rotate(-90)" font-size="7" fill="#ff3f00" font-weight="bold" textLength="7" lengthAdjust="spacingAndGlyphs" text-anchor="middle">44</text>
<text transform="translate(812,428) rotate(-90)" font-size="7" fill="#ff3f00" font-weight="bold" textLength="7" lengthAdjust="spacingAndGlyphs" text-anchor="middle">41</text>
<text transform="translate(782,457) rotate(-90)" font-size="7" fill="#ff3f00" font-weight="bold" textLength="13" lengthAdjust="spacingAndGlyphs" text-anchor="middle">1000</text>
<text transform="translate(792,454) rotate(-90)" font-size="7" fill="#ff3f00" font-weight="bold" textLength="13" lengthAdjust="spacingAndGlyphs" text-anchor="middle">1250</text>
<text transform="translate(812,475) rotate(-90)" font-size="7" fill="#ff3f00" font-weight="bold" textLength="13" lengthAdjust="spacingAndGlyphs" text-anchor="middle">1131</text>
<text transform="translate(812,519) rotate(-90)" font-size="7" fill="#ff3f00" font-weight="bold" textLength="7" lengthAdjust="spacingAndGlyphs" text-anchor="middle">41</text>
<text transform="translate(793,554) rotate(-90)" font-size="7" fill="#ff3f00" font-weight="bold" textLength="7" lengthAdjust="spacingAndGlyphs" text-anchor="middle">35</text>
<text transform="translate(985,120) rotate(-90)" font-size="7" fill="#ff3f00" font-weight="bold" textLength="7" lengthAdjust="spacingAndGlyphs" text-anchor="middle">50</text>
<text transform="translate(985,352) rotate(-90)" font-size="7" fill="#ff3f00" font-weight="bold" textLength="7" lengthAdjust="spacingAndGlyphs" text-anchor="middle">60</text>
<text transform="translate(995,226) rotate(-90)" font-size="7" fill="#ff3f00" font-weight="bold" textLength="10" lengthAdjust="spacingAndGlyphs" text-anchor="middle">808</text>
<text transform="translate(984,234) rotate(-90)" font-size="7" fill="#ff3f00" font-weight="bold" textLength="10" lengthAdjust="spacingAndGlyphs" text-anchor="middle">789</text>
<text transform="translate(974,237) rotate(-90)" font-size="7" fill="#ff3f00" font-weight="bold" textLength="60" lengthAdjust="spacingAndGlyphs" text-anchor="middle">FLÜGELMASS = 608</text>
<text transform="translate(964,234) rotate(-90)" font-size="7" fill="#ff3f00" font-weight="bold" textLength="10" lengthAdjust="spacingAndGlyphs" text-anchor="middle">592</text>
<text transform="translate(955,239) rotate(-90)" font-size="7" fill="#ff3f00" font-weight="bold" textLength="50" lengthAdjust="spacingAndGlyphs" text-anchor="middle">GLASMASS = 551</text>
<text transform="translate(954,477) rotate(-90)" font-size="7" fill="#ff3f00" font-weight="bold" textLength="54" lengthAdjust="spacingAndGlyphs" text-anchor="middle">GLASMASS = 1016</text>
<text transform="translate(965,469) rotate(-90)" font-size="7" fill="#ff3f00" font-weight="bold" textLength="13" lengthAdjust="spacingAndGlyphs" text-anchor="middle">1035</text>
<text transform="translate(974,474) rotate(-90)" font-size="7" fill="#ff3f00" font-weight="bold" textLength="62" lengthAdjust="spacingAndGlyphs" text-anchor="middle">FLÜGELMASS = 1067</text>
<text transform="translate(984,461) rotate(-90)" font-size="7" fill="#ff3f00" font-weight="bold" textLength="13" lengthAdjust="spacingAndGlyphs" text-anchor="middle">1000</text>
<text transform="translate(994,457) rotate(-90)" font-size="7" fill="#ff3f00" font-weight="bold" textLength="13" lengthAdjust="spacingAndGlyphs" text-anchor="middle">1000</text>
<text transform="translate(985,550) rotate(-90)" font-size="7" fill="#ff3f00" font-weight="bold" textLength="7" lengthAdjust="spacingAndGlyphs" text-anchor="middle">10</text>
</g>
<g shape-rendering="geometricPrecision">
<path d="M195.8,736 V658.5 H229.6 V736" stroke="#000000" stroke-width="2" fill="none"/>
<line x1="196.3" y1="662.5" x2="229.1" y2="662.5" stroke="#000000" stroke-width="1" />
<line x1="195.3" y1="736" x2="230.1" y2="736" stroke="#000000" stroke-width="1.6" />
<path d="M195.8,736 V744 H202.3 V738 M229.6,736 V744 H223.1 V738 M210.3,736 V772 M215.1,736 V772" stroke="#000000" stroke-width="1.6" fill="none"/>
<path d="M195.8,775 V793.5 H229.6 V775 M195.8,775 h4 M229.6,775 h-4 M198.3,781 v6 M227.1,781 v6 M205.3,778 H220.1" stroke="#000000" stroke-width="1.6" fill="none"/>
<line x1="195.3" y1="790.5" x2="230.1" y2="790.5" stroke="#000000" stroke-width="1" />
<rect x="210.7" y="747" width="4" height="36" fill="#ff00ff" stroke="none" stroke-width="1" />
<path d="M212.7,748 V782" stroke="#ffff00" stroke-width="1" stroke-dasharray="1.5,1.5"/>
<rect x="205.7" y="772.5" width="14" height="6.5" fill="#ffff00" stroke="#00ff00" stroke-width="1.2" />
<path d="M204.7,758.5 h16 M205.7,758 v14 M219.7,758 v14" stroke="#ffff00" stroke-width="1.6" fill="none"/>
<rect x="221.1" y="743.5" width="9" height="9" fill="none" stroke="#ff00ff" stroke-width="2"/>
<rect x="222.1" y="754" width="11.5" height="16" fill="none" stroke="#0000ff" stroke-width="1.5"/><path d="M222.1,754 l11.5,16 M233.6,754 l-11.5,16" stroke="#0000ff" stroke-width="1"/>
<rect x="221.1" y="772" width="13" height="6" fill="#ff00ff"/>
<path d="M429.1,736 V658.5 H462.3 V736" stroke="#000000" stroke-width="2" fill="none"/>
<line x1="429.6" y1="662.5" x2="461.8" y2="662.5" stroke="#000000" stroke-width="1" />
<line x1="428.6" y1="736" x2="462.8" y2="736" stroke="#000000" stroke-width="1.6" />
<path d="M429.1,736 V744 H435.6 V738 M462.3,736 V744 H455.8 V738 M443.6,736 V772 M447.8,736 V772" stroke="#000000" stroke-width="1.6" fill="none"/>
<path d="M429.1,775 V793.5 H462.3 V775 M429.1,775 h4 M462.3,775 h-4 M431.6,781 v6 M459.8,781 v6 M438.6,778 H452.8" stroke="#000000" stroke-width="1.6" fill="none"/>
<line x1="428.6" y1="790.5" x2="462.8" y2="790.5" stroke="#000000" stroke-width="1" />
<rect x="443.70000000000005" y="747" width="4" height="36" fill="#ff00ff" stroke="none" stroke-width="1" />
<path d="M445.70000000000005,748 V782" stroke="#ffff00" stroke-width="1" stroke-dasharray="1.5,1.5"/>
<rect x="438.70000000000005" y="772.5" width="14" height="6.5" fill="#ffff00" stroke="#00ff00" stroke-width="1.2" />
<path d="M437.70000000000005,758.5 h16 M438.70000000000005,758 v14 M452.70000000000005,758 v14" stroke="#ffff00" stroke-width="1.6" fill="none"/>
<rect x="453.8" y="743.5" width="9" height="9" fill="none" stroke="#ff00ff" stroke-width="2"/>
<rect x="454.8" y="754" width="11.5" height="16" fill="none" stroke="#0000ff" stroke-width="1.5"/><path d="M454.8,754 l11.5,16 M466.3,754 l-11.5,16" stroke="#0000ff" stroke-width="1"/>
<rect x="453.8" y="772" width="13" height="6" fill="#ff00ff"/>
<rect x="428.6" y="743.5" width="9" height="9" fill="none" stroke="#ff00ff" stroke-width="2"/>
<rect x="425.0" y="754" width="11.5" height="16" fill="none" stroke="#0000ff" stroke-width="1.5"/><path d="M425.0,754 l11.5,16 M436.5,754 l-11.5,16" stroke="#0000ff" stroke-width="1"/>
<rect x="424.6" y="772" width="13" height="6" fill="#ff00ff"/>
<path d="M674.2,736 V658.5 H707.8 V736" stroke="#000000" stroke-width="2" fill="none"/>
<line x1="674.7" y1="662.5" x2="707.3" y2="662.5" stroke="#000000" stroke-width="1" />
<line x1="673.7" y1="736" x2="708.3" y2="736" stroke="#000000" stroke-width="1.6" />
<path d="M674.2,736 V744 H680.7 V738 M707.8,736 V744 H701.3 V738 M688.7,736 V772 M693.3,736 V772" stroke="#000000" stroke-width="1.6" fill="none"/>
<path d="M674.2,775 V793.5 H707.8 V775 M674.2,775 h4 M707.8,775 h-4 M676.7,781 v6 M705.3,781 v6 M683.7,778 H698.3" stroke="#000000" stroke-width="1.6" fill="none"/>
<line x1="673.7" y1="790.5" x2="708.3" y2="790.5" stroke="#000000" stroke-width="1" />
<rect x="689.0" y="747" width="4" height="36" fill="#ff00ff" stroke="none" stroke-width="1" />
<path d="M691.0,748 V782" stroke="#ffff00" stroke-width="1" stroke-dasharray="1.5,1.5"/>
<rect x="684.0" y="772.5" width="14" height="6.5" fill="#ffff00" stroke="#00ff00" stroke-width="1.2" />
<path d="M683.0,758.5 h16 M684.0,758 v14 M698.0,758 v14" stroke="#ffff00" stroke-width="1.6" fill="none"/>
<rect x="699.3" y="743.5" width="9" height="9" fill="none" stroke="#ff00ff" stroke-width="2"/>
<rect x="700.3" y="754" width="11.5" height="16" fill="none" stroke="#0000ff" stroke-width="1.5"/><path d="M700.3,754 l11.5,16 M711.8,754 l-11.5,16" stroke="#0000ff" stroke-width="1"/>
<rect x="699.3" y="772" width="13" height="6" fill="#ff00ff"/>
<rect x="673.7" y="743.5" width="9" height="9" fill="none" stroke="#ff00ff" stroke-width="2"/>
<rect x="670.1" y="754" width="11.5" height="16" fill="none" stroke="#0000ff" stroke-width="1.5"/><path d="M670.1,754 l11.5,16 M681.6,754 l-11.5,16" stroke="#0000ff" stroke-width="1"/>
<rect x="669.7" y="772" width="13" height="6" fill="#ff00ff"/>
<path d="M906.5,736 V658.5 H940.6 V736" stroke="#000000" stroke-width="2" fill="none"/>
<line x1="907" y1="662.5" x2="940.1" y2="662.5" stroke="#000000" stroke-width="1" />
<line x1="906" y1="736" x2="941.1" y2="736" stroke="#000000" stroke-width="1.6" />
<path d="M906.5,736 V744 H913 V738 M940.6,736 V744 H934.1 V738 M921,736 V772 M926.1,736 V772" stroke="#000000" stroke-width="1.6" fill="none"/>
<path d="M906.5,775 V793.5 H940.6 V775 M906.5,775 h4 M940.6,775 h-4 M909,781 v6 M938.1,781 v6 M916,778 H931.1" stroke="#000000" stroke-width="1.6" fill="none"/>
<line x1="906" y1="790.5" x2="941.1" y2="790.5" stroke="#000000" stroke-width="1" />
<rect x="921.55" y="747" width="4" height="36" fill="#ff00ff" stroke="none" stroke-width="1" />
<path d="M923.55,748 V782" stroke="#ffff00" stroke-width="1" stroke-dasharray="1.5,1.5"/>
<rect x="916.55" y="772.5" width="14" height="6.5" fill="#ffff00" stroke="#00ff00" stroke-width="1.2" />
<path d="M915.55,758.5 h16 M916.55,758 v14 M930.55,758 v14" stroke="#ffff00" stroke-width="1.6" fill="none"/>
<rect x="906" y="743.5" width="9" height="9" fill="none" stroke="#ff00ff" stroke-width="2"/>
<rect x="902.4" y="754" width="11.5" height="16" fill="none" stroke="#0000ff" stroke-width="1.5"/><path d="M902.4,754 l11.5,16 M913.9,754 l-11.5,16" stroke="#0000ff" stroke-width="1"/>
<rect x="902" y="772" width="13" height="6" fill="#ff00ff"/>
<defs><g id="hprof"><path d="M1,730.5 H20.3 V744.4 H1 Z M3,733 v9 M17,733 v9" stroke="#000000" stroke-width="1.6" fill="none"/><path d="M16.7,742 V723.5 H72.4 V750" stroke="#000000" stroke-width="1.8" fill="none"/><path d="M36.9,724 V744.5 H52.6 V724" stroke="#000000" stroke-width="1.6" fill="none"/><rect x="25" y="726.5" width="11" height="18" rx="2" stroke="#00ffff" stroke-width="1.3" fill="none"/><path d="M27,731 q3,4 0,8 M33,731 q-3,4 0,8 M22,736 h16 M30,730 v12" stroke="#00ffff" stroke-width="1" fill="none"/><path d="M25,735.5 h11 M30.5,730 v11" stroke="#ffff00" stroke-width="0.9"/><path d="M54,737 L59,732 L56,729 L61,725 M56,738 l5,-3" stroke="#ffff00" stroke-width="1.8" fill="none"/><path d="M4,745 H12 Q18,745 18,757 Q18,769 12,769 H4 Z M9,746 V768 M13,747 V767" stroke="#0000ff" stroke-width="1.5" fill="none"/><path d="M18,745.5 L30,749 V768 L18,772 Z M20,755 h9 M20,762 h9" stroke="#ff00ff" stroke-width="1.4" fill="none"/><path d="M33,746.5 H50 Q53,746.5 53,751 V764 Q53,768 50,768 H33 Q30,768 30,764 V751 Q30,746.5 33,746.5 Z M39,747 V767 M30,757 h9" stroke="#0000ff" stroke-width="1.6" fill="none"/><path d="M52.6,748 Q58,749 61,752 Q65,755 69,753 M52.6,768 Q58,770 62,774 Q66,777 70,775" stroke="#ff00ff" stroke-width="1.4" fill="none"/><rect x="66" y="750" width="7" height="6" fill="#ff00ff"/><rect x="66" y="772" width="7" height="6" fill="#ff00ff"/><path d="M66,757 V771 M70,757 V771" stroke="#ff00ff" stroke-width="1.2"/><path d="M6.8,771 V779.3 H72.4 V774 M14,779 v-5 h-4 M36,779 v-9 h6 v9 M53,779 v-7 h6 v7" stroke="#000000" stroke-width="1.8" fill="none"/><path d="M6.8,768.5 H40" stroke="#000000" stroke-width="1.4"/></g></defs>
<use href="#hprof" transform="matrix(0,1,-1,0,1623.5,138.7)"/>
<rect x="853.5" y="130.7" width="16" height="11.5" fill="none" stroke="#0000ff" stroke-width="1.5"/><path d="M853.5,130.7 l16,11.5 M869.5,130.7 l-16,11.5" stroke="#0000ff" stroke-width="1"/>
<rect x="870.8" y="129.7" width="9" height="9" fill="none" stroke="#ff00ff" stroke-width="2"/>
<rect x="845.5" y="129.7" width="6" height="13" fill="#ff00ff"/>
<use href="#hprof" transform="matrix(0,-1,-1,0,1623.5,334.3)"/>
<rect x="853.5" y="330.7" width="16" height="11.5" fill="none" stroke="#0000ff" stroke-width="1.5"/><path d="M853.5,330.7 l16,11.5 M869.5,330.7 l-16,11.5" stroke="#0000ff" stroke-width="1"/>
<rect x="870.8" y="334.3" width="9" height="9" fill="none" stroke="#ff00ff" stroke-width="2"/>
<rect x="845.5" y="330.3" width="6" height="13" fill="#ff00ff"/>
<use href="#hprof" transform="matrix(0,1.1,-1,0,1623.5,369.9)"/>
<rect x="853.5" y="361.9" width="16" height="11.5" fill="none" stroke="#0000ff" stroke-width="1.5"/><path d="M853.5,361.9 l16,11.5 M869.5,361.9 l-16,11.5" stroke="#0000ff" stroke-width="1"/>
<rect x="870.8" y="360.9" width="9" height="9" fill="none" stroke="#ff00ff" stroke-width="2"/>
<rect x="845.5" y="360.9" width="6" height="13" fill="#ff00ff"/>
<use href="#hprof" transform="matrix(0,-1,-1,0,1623.5,564.5)"/>
<use href="#hprof" transform="matrix(1,0,0,1,230.1,0)"/>
<use href="#hprof" transform="matrix(1.12,0,0,1,462.8,0)"/>
<use href="#hprof" transform="matrix(1,0,0,1,708.3,0)"/>
<use href="#hprof" transform="matrix(-1,0,0,1,428.6,0)"/>
<use href="#hprof" transform="matrix(-1.12,0,0,1,673.7,0)"/>
<use href="#hprof" transform="matrix(-1,0,0,1,906,0)"/>
<rect x="292.4" y="756.3" width="34.10000000000002" height="4" fill="#ff0000" stroke="none" stroke-width="1" />
<rect x="332.5" y="756.3" width="34.0" height="4" fill="#ff0000" stroke="none" stroke-width="1" />
<rect x="292.4" y="769.3" width="34.10000000000002" height="4" fill="#ff0000" stroke="none" stroke-width="1" />
<rect x="332.5" y="769.3" width="34.0" height="4" fill="#ff0000" stroke="none" stroke-width="1" />
<line x1="302.4" y1="723.5" x2="326.5" y2="723.5" stroke="#00ffff" stroke-width="1" />
<line x1="332.5" y1="723.5" x2="356.5" y2="723.5" stroke="#00ffff" stroke-width="1" />
<line x1="302.4" y1="751.5" x2="326.5" y2="751.5" stroke="#00ffff" stroke-width="1" />
<line x1="332.5" y1="751.5" x2="356.5" y2="751.5" stroke="#00ffff" stroke-width="1" />
<line x1="302.4" y1="779" x2="326.5" y2="779" stroke="#00ffff" stroke-width="1" />
<line x1="332.5" y1="779" x2="356.5" y2="779" stroke="#00ffff" stroke-width="1" />
<line x1="326.0" y1="712" x2="326.0" y2="786" stroke="#00ffff" stroke-width="1" />
<line x1="333.0" y1="712" x2="333.0" y2="786" stroke="#00ffff" stroke-width="1" />
<line x1="329.5" y1="597" x2="329.5" y2="853" stroke="#ff0000" stroke-width="1.2" />
<rect x="531.6" y="756.3" width="34.299999999999955" height="4" fill="#ff0000" stroke="none" stroke-width="1" />
<rect x="571.9" y="756.3" width="33.60000000000002" height="4" fill="#ff0000" stroke="none" stroke-width="1" />
<rect x="531.6" y="769.3" width="34.299999999999955" height="4" fill="#ff0000" stroke="none" stroke-width="1" />
<rect x="571.9" y="769.3" width="33.60000000000002" height="4" fill="#ff0000" stroke="none" stroke-width="1" />
<line x1="541.6" y1="719" x2="565.9" y2="719" stroke="#00ffff" stroke-width="1" />
<line x1="571.9" y1="719" x2="595.5" y2="719" stroke="#00ffff" stroke-width="1" />
<line x1="541.6" y1="751.5" x2="565.9" y2="751.5" stroke="#00ffff" stroke-width="1" />
<line x1="571.9" y1="751.5" x2="595.5" y2="751.5" stroke="#00ffff" stroke-width="1" />
<line x1="541.6" y1="779" x2="565.9" y2="779" stroke="#00ffff" stroke-width="1" />
<line x1="571.9" y1="779" x2="595.5" y2="779" stroke="#00ffff" stroke-width="1" />
<line x1="565.4" y1="712" x2="565.4" y2="786" stroke="#00ffff" stroke-width="1" />
<line x1="572.4" y1="712" x2="572.4" y2="786" stroke="#00ffff" stroke-width="1" />
<line x1="568.9" y1="597" x2="568.9" y2="853" stroke="#ff0000" stroke-width="1.2" />
<rect x="770" y="756.3" width="34.60000000000002" height="4" fill="#ff0000" stroke="none" stroke-width="1" />
<rect x="810.6" y="756.3" width="34.39999999999998" height="4" fill="#ff0000" stroke="none" stroke-width="1" />
<rect x="770" y="769.3" width="34.60000000000002" height="4" fill="#ff0000" stroke="none" stroke-width="1" />
<rect x="810.6" y="769.3" width="34.39999999999998" height="4" fill="#ff0000" stroke="none" stroke-width="1" />
<line x1="780" y1="723.5" x2="804.6" y2="723.5" stroke="#00ffff" stroke-width="1" />
<line x1="810.6" y1="723.5" x2="835" y2="723.5" stroke="#00ffff" stroke-width="1" />
<line x1="780" y1="751.5" x2="804.6" y2="751.5" stroke="#00ffff" stroke-width="1" />
<line x1="810.6" y1="751.5" x2="835" y2="751.5" stroke="#00ffff" stroke-width="1" />
<line x1="780" y1="779" x2="804.6" y2="779" stroke="#00ffff" stroke-width="1" />
<line x1="810.6" y1="779" x2="835" y2="779" stroke="#00ffff" stroke-width="1" />
<line x1="804.1" y1="712" x2="804.1" y2="786" stroke="#00ffff" stroke-width="1" />
<line x1="811.1" y1="712" x2="811.1" y2="786" stroke="#00ffff" stroke-width="1" />
<line x1="807.6" y1="597" x2="807.6" y2="853" stroke="#ff0000" stroke-width="1.2" />
<path d="M396.5,718 L396.5,687 Q396.5,684 400.75,684 Q405,684 405,687 L405,718 M392.5,718 H409 V725 H392.5 Z M394.5,713 H407" stroke="#00ffff" stroke-width="1.2" fill="none"/>
<line x1="400.75" y1="681" x2="400.75" y2="745" stroke="#ffff00" stroke-width="1" />
<path d="M395.5,728 v14 q5.25,6 10.5,0 v-14" stroke="#00ffff" stroke-width="1.1" fill="none"/>
<path d="M641.5,713 L641.5,683 Q641.5,680 646.75,680 Q652,680 652,683 L652,713 M637.5,713 H656 V720 H637.5 Z M639.5,708 H654" stroke="#00ffff" stroke-width="1.2" fill="none"/>
<line x1="646.75" y1="677" x2="646.75" y2="740" stroke="#ffff00" stroke-width="1" />
<path d="M640.5,723 v14 q6.25,6 12.5,0 v-14" stroke="#00ffff" stroke-width="1.1" fill="none"/>
<path d="M731.7,718 L731.7,687 Q731.7,684 735.85,684 Q740,684 740,687 L740,718 M727.7,718 H744 V725 H727.7 Z M729.7,713 H742" stroke="#00ffff" stroke-width="1.2" fill="none"/>
<line x1="735.85" y1="681" x2="735.85" y2="745" stroke="#ffff00" stroke-width="1" />
<path d="M730.7,728 v14 q5.149999999999977,6 10.299999999999955,0 v-14" stroke="#00ffff" stroke-width="1.1" fill="none"/>
<line x1="195" y1="598.5" x2="941" y2="598.5" stroke="#ff3f00" stroke-width="1" />
<line x1="195" y1="608.5" x2="941" y2="608.5" stroke="#ff3f00" stroke-width="1" />
<line x1="195.3" y1="594" x2="195.3" y2="659" stroke="#ff3f00" stroke-width="1" />
<line x1="445.7" y1="594" x2="445.7" y2="659" stroke="#ff3f00" stroke-width="1" />
<line x1="690.6" y1="594" x2="690.6" y2="659" stroke="#ff3f00" stroke-width="1" />
<line x1="941" y1="594" x2="941" y2="659" stroke="#ff3f00" stroke-width="1" />
<line x1="230.1" y1="604" x2="230.1" y2="659" stroke="#ff3f00" stroke-width="1" />
<line x1="428.6" y1="604" x2="428.6" y2="659" stroke="#ff3f00" stroke-width="1" />
<line x1="462.8" y1="604" x2="462.8" y2="659" stroke="#ff3f00" stroke-width="1" />
<line x1="673.7" y1="604" x2="673.7" y2="659" stroke="#ff3f00" stroke-width="1" />
<line x1="708.3" y1="604" x2="708.3" y2="659" stroke="#ff3f00" stroke-width="1" />
<line x1="906" y1="604" x2="906" y2="659" stroke="#ff3f00" stroke-width="1" />
<line x1="247.3" y1="618.5" x2="411.6" y2="618.5" stroke="#ff3f00" stroke-width="1" />
<line x1="247.3" y1="614" x2="247.3" y2="659" stroke="#ff3f00" stroke-width="1" />
<line x1="411.6" y1="614" x2="411.6" y2="659" stroke="#ff3f00" stroke-width="1" />
<line x1="286.5" y1="628.5" x2="371" y2="628.5" stroke="#ff3f00" stroke-width="1" />
<line x1="286.5" y1="624" x2="286.5" y2="659" stroke="#ff3f00" stroke-width="1" />
<line x1="371" y1="624" x2="371" y2="659" stroke="#ff3f00" stroke-width="1" />
<line x1="292.4" y1="638.5" x2="366.5" y2="638.5" stroke="#ff3f00" stroke-width="1" />
<line x1="292.4" y1="634" x2="292.4" y2="659" stroke="#ff3f00" stroke-width="1" />
<line x1="366.5" y1="634" x2="366.5" y2="659" stroke="#ff3f00" stroke-width="1" />
<text x="329.5" y="616" font-size="8" fill="#ff3f00" font-weight="bold" textLength="50" lengthAdjust="spacingAndGlyphs" text-anchor="middle">FLÜGELMASS = 872</text>
<text x="329.5" y="626" font-size="8" fill="#ff3f00" font-weight="bold" textLength="12" lengthAdjust="spacingAndGlyphs" text-anchor="middle">763</text>
<text x="329.5" y="636" font-size="8" fill="#ff3f00" font-weight="bold" textLength="42" lengthAdjust="spacingAndGlyphs" text-anchor="middle">GLASMASS = 740</text>
<text x="329.5" y="606" font-size="8" fill="#ff3f00" font-weight="bold" textLength="12" lengthAdjust="spacingAndGlyphs" text-anchor="middle">935</text>
<line x1="479.6" y1="618.5" x2="657.8" y2="618.5" stroke="#ff3f00" stroke-width="1" />
<line x1="479.6" y1="614" x2="479.6" y2="659" stroke="#ff3f00" stroke-width="1" />
<line x1="657.8" y1="614" x2="657.8" y2="659" stroke="#ff3f00" stroke-width="1" />
<line x1="525.5" y1="628.5" x2="611" y2="628.5" stroke="#ff3f00" stroke-width="1" />
<line x1="525.5" y1="624" x2="525.5" y2="659" stroke="#ff3f00" stroke-width="1" />
<line x1="611" y1="624" x2="611" y2="659" stroke="#ff3f00" stroke-width="1" />
<line x1="531.6" y1="638.5" x2="605.5" y2="638.5" stroke="#ff3f00" stroke-width="1" />
<line x1="531.6" y1="634" x2="531.6" y2="659" stroke="#ff3f00" stroke-width="1" />
<line x1="605.5" y1="634" x2="605.5" y2="659" stroke="#ff3f00" stroke-width="1" />
<text x="568.9" y="616" font-size="8" fill="#ff3f00" font-weight="bold" textLength="54" lengthAdjust="spacingAndGlyphs" text-anchor="middle">FLÜGELMASS = 1106</text>
<text x="568.9" y="626" font-size="8" fill="#ff3f00" font-weight="bold" textLength="12" lengthAdjust="spacingAndGlyphs" text-anchor="middle">992</text>
<text x="568.9" y="636" font-size="8" fill="#ff3f00" font-weight="bold" textLength="42" lengthAdjust="spacingAndGlyphs" text-anchor="middle">GLASMASS = 958</text>
<text x="568.9" y="606" font-size="8" fill="#ff3f00" font-weight="bold" textLength="12" lengthAdjust="spacingAndGlyphs" text-anchor="middle">1152</text>
<line x1="725.7" y1="618.5" x2="889.8" y2="618.5" stroke="#ff3f00" stroke-width="1" />
<line x1="725.7" y1="614" x2="725.7" y2="659" stroke="#ff3f00" stroke-width="1" />
<line x1="889.8" y1="614" x2="889.8" y2="659" stroke="#ff3f00" stroke-width="1" />
<line x1="764.5" y1="628.5" x2="850.5" y2="628.5" stroke="#ff3f00" stroke-width="1" />
<line x1="764.5" y1="624" x2="764.5" y2="659" stroke="#ff3f00" stroke-width="1" />
<line x1="850.5" y1="624" x2="850.5" y2="659" stroke="#ff3f00" stroke-width="1" />
<line x1="770" y1="638.5" x2="845" y2="638.5" stroke="#ff3f00" stroke-width="1" />
<line x1="770" y1="634" x2="770" y2="659" stroke="#ff3f00" stroke-width="1" />
<line x1="845" y1="634" x2="845" y2="659" stroke="#ff3f00" stroke-width="1" />
<text x="807.6" y="616" font-size="8" fill="#ff3f00" font-weight="bold" textLength="50" lengthAdjust="spacingAndGlyphs" text-anchor="middle">FLÜGELMASS = 872</text>
<text x="807.6" y="626" font-size="8" fill="#ff3f00" font-weight="bold" textLength="12" lengthAdjust="spacingAndGlyphs" text-anchor="middle">763</text>
<text x="807.6" y="636" font-size="8" fill="#ff3f00" font-weight="bold" textLength="42" lengthAdjust="spacingAndGlyphs" text-anchor="middle">GLASMASS = 740</text>
<text x="807.6" y="606" font-size="8" fill="#ff3f00" font-weight="bold" textLength="12" lengthAdjust="spacingAndGlyphs" text-anchor="middle">935</text>
<text x="322" y="597" font-size="8" fill="#ff3f00" font-weight="bold" textLength="16" lengthAdjust="spacingAndGlyphs" text-anchor="middle">1000</text>
<text x="568" y="597" font-size="8" fill="#ff3f00" font-weight="bold" textLength="16" lengthAdjust="spacingAndGlyphs" text-anchor="middle">1200</text>
<text x="818" y="597" font-size="8" fill="#ff3f00" font-weight="bold" textLength="16" lengthAdjust="spacingAndGlyphs" text-anchor="middle">1000</text>
<text x="212.7" y="606" font-size="8" fill="#ff3f00" font-weight="bold" textLength="8" lengthAdjust="spacingAndGlyphs" text-anchor="middle">60</text>
<text x="445.7" y="606" font-size="8" fill="#ff3f00" font-weight="bold" textLength="8" lengthAdjust="spacingAndGlyphs" text-anchor="middle">60</text>
<text x="690.6" y="606" font-size="8" fill="#ff3f00" font-weight="bold" textLength="8" lengthAdjust="spacingAndGlyphs" text-anchor="middle">60</text>
<text x="923.5" y="606" font-size="8" fill="#ff3f00" font-weight="bold" textLength="8" lengthAdjust="spacingAndGlyphs" text-anchor="middle">60</text>
<line x1="195.3" y1="793" x2="195.3" y2="855" stroke="#ff3f00" stroke-width="1" />
<line x1="230.1" y1="793" x2="230.1" y2="855" stroke="#ff3f00" stroke-width="1" />
<line x1="428.6" y1="793" x2="428.6" y2="855" stroke="#ff3f00" stroke-width="1" />
<line x1="462.8" y1="793" x2="462.8" y2="855" stroke="#ff3f00" stroke-width="1" />
<line x1="673.7" y1="793" x2="673.7" y2="855" stroke="#ff3f00" stroke-width="1" />
<line x1="708.3" y1="793" x2="708.3" y2="855" stroke="#ff3f00" stroke-width="1" />
<line x1="906" y1="793" x2="906" y2="855" stroke="#ff3f00" stroke-width="1" />
<line x1="941.1" y1="793" x2="941.1" y2="855" stroke="#ff3f00" stroke-width="1" />
<line x1="237.1" y1="793" x2="237.1" y2="815" stroke="#ff3f00" stroke-width="1" />
<line x1="268.1" y1="793" x2="268.1" y2="815" stroke="#ff3f00" stroke-width="1" />
<line x1="273.1" y1="793" x2="273.1" y2="815" stroke="#ff3f00" stroke-width="1" />
<line x1="302.1" y1="793" x2="302.1" y2="815" stroke="#ff3f00" stroke-width="1" />
<line x1="356.6" y1="793" x2="356.6" y2="815" stroke="#ff3f00" stroke-width="1" />
<line x1="385.6" y1="793" x2="385.6" y2="815" stroke="#ff3f00" stroke-width="1" />
<line x1="390.6" y1="793" x2="390.6" y2="815" stroke="#ff3f00" stroke-width="1" />
<line x1="421.6" y1="793" x2="421.6" y2="815" stroke="#ff3f00" stroke-width="1" />
<line x1="237.1" y1="813.5" x2="268.1" y2="813.5" stroke="#ff3f00" stroke-width="1" />
<line x1="273.1" y1="813.5" x2="302.1" y2="813.5" stroke="#ff3f00" stroke-width="1" />
<line x1="302.1" y1="813.5" x2="356.6" y2="813.5" stroke="#ff3f00" stroke-width="1" />
<line x1="356.6" y1="813.5" x2="385.6" y2="813.5" stroke="#ff3f00" stroke-width="1" />
<line x1="390.6" y1="813.5" x2="421.6" y2="813.5" stroke="#ff3f00" stroke-width="1" />
<text x="252.60000000000002" y="811" font-size="8" fill="#ff3f00" font-weight="bold" textLength="8" lengthAdjust="spacingAndGlyphs" text-anchor="middle">44</text>
<text x="287.6" y="811" font-size="8" fill="#ff3f00" font-weight="bold" textLength="8" lengthAdjust="spacingAndGlyphs" text-anchor="middle">41</text>
<text x="329.5" y="811" font-size="8" fill="#ff3f00" font-weight="bold" textLength="12" lengthAdjust="spacingAndGlyphs" text-anchor="middle">221</text>
<text x="371.1" y="811" font-size="8" fill="#ff3f00" font-weight="bold" textLength="8" lengthAdjust="spacingAndGlyphs" text-anchor="middle">41</text>
<text x="406.1" y="811" font-size="8" fill="#ff3f00" font-weight="bold" textLength="8" lengthAdjust="spacingAndGlyphs" text-anchor="middle">44</text>
<line x1="222.1" y1="822.5" x2="436.6" y2="822.5" stroke="#ff3f00" stroke-width="1" />
<line x1="222.1" y1="793" x2="222.1" y2="825" stroke="#ff3f00" stroke-width="1" />
<line x1="436.6" y1="793" x2="436.6" y2="825" stroke="#ff3f00" stroke-width="1" />
<text x="329.5" y="820" font-size="8" fill="#ff3f00" font-weight="bold" textLength="12" lengthAdjust="spacingAndGlyphs" text-anchor="middle">848</text>
<text x="329.5" y="830" font-size="8" fill="#ff3f00" font-weight="bold" textLength="12" lengthAdjust="spacingAndGlyphs" text-anchor="middle">935</text>
<text x="329.5" y="840" font-size="8" fill="#ff3f00" font-weight="bold" textLength="16" lengthAdjust="spacingAndGlyphs" text-anchor="middle">1000</text>
<line x1="469.8" y1="793" x2="469.8" y2="815" stroke="#ff3f00" stroke-width="1" />
<line x1="500.8" y1="793" x2="500.8" y2="815" stroke="#ff3f00" stroke-width="1" />
<line x1="505.8" y1="793" x2="505.8" y2="815" stroke="#ff3f00" stroke-width="1" />
<line x1="534.8" y1="793" x2="534.8" y2="815" stroke="#ff3f00" stroke-width="1" />
<line x1="601.7" y1="793" x2="601.7" y2="815" stroke="#ff3f00" stroke-width="1" />
<line x1="630.7" y1="793" x2="630.7" y2="815" stroke="#ff3f00" stroke-width="1" />
<line x1="635.7" y1="793" x2="635.7" y2="815" stroke="#ff3f00" stroke-width="1" />
<line x1="666.7" y1="793" x2="666.7" y2="815" stroke="#ff3f00" stroke-width="1" />
<line x1="469.8" y1="813.5" x2="500.8" y2="813.5" stroke="#ff3f00" stroke-width="1" />
<line x1="505.8" y1="813.5" x2="534.8" y2="813.5" stroke="#ff3f00" stroke-width="1" />
<line x1="534.8" y1="813.5" x2="601.7" y2="813.5" stroke="#ff3f00" stroke-width="1" />
<line x1="601.7" y1="813.5" x2="630.7" y2="813.5" stroke="#ff3f00" stroke-width="1" />
<line x1="635.7" y1="813.5" x2="666.7" y2="813.5" stroke="#ff3f00" stroke-width="1" />
<text x="485.3" y="811" font-size="8" fill="#ff3f00" font-weight="bold" textLength="8" lengthAdjust="spacingAndGlyphs" text-anchor="middle">44</text>
<text x="520.3" y="811" font-size="8" fill="#ff3f00" font-weight="bold" textLength="8" lengthAdjust="spacingAndGlyphs" text-anchor="middle">41</text>
<text x="568.9" y="811" font-size="8" fill="#ff3f00" font-weight="bold" textLength="12" lengthAdjust="spacingAndGlyphs" text-anchor="middle">221</text>
<text x="616.2" y="811" font-size="8" fill="#ff3f00" font-weight="bold" textLength="8" lengthAdjust="spacingAndGlyphs" text-anchor="middle">41</text>
<text x="651.2" y="811" font-size="8" fill="#ff3f00" font-weight="bold" textLength="8" lengthAdjust="spacingAndGlyphs" text-anchor="middle">44</text>
<line x1="454.8" y1="822.5" x2="681.7" y2="822.5" stroke="#ff3f00" stroke-width="1" />
<line x1="454.8" y1="793" x2="454.8" y2="825" stroke="#ff3f00" stroke-width="1" />
<line x1="681.7" y1="793" x2="681.7" y2="825" stroke="#ff3f00" stroke-width="1" />
<text x="568.9" y="820" font-size="8" fill="#ff3f00" font-weight="bold" textLength="12" lengthAdjust="spacingAndGlyphs" text-anchor="middle">1174</text>
<text x="568.9" y="830" font-size="8" fill="#ff3f00" font-weight="bold" textLength="12" lengthAdjust="spacingAndGlyphs" text-anchor="middle">1152</text>
<text x="568.9" y="840" font-size="8" fill="#ff3f00" font-weight="bold" textLength="16" lengthAdjust="spacingAndGlyphs" text-anchor="middle">1200</text>
<line x1="715.3" y1="793" x2="715.3" y2="815" stroke="#ff3f00" stroke-width="1" />
<line x1="746.3" y1="793" x2="746.3" y2="815" stroke="#ff3f00" stroke-width="1" />
<line x1="751.3" y1="793" x2="751.3" y2="815" stroke="#ff3f00" stroke-width="1" />
<line x1="780.3" y1="793" x2="780.3" y2="815" stroke="#ff3f00" stroke-width="1" />
<line x1="834" y1="793" x2="834" y2="815" stroke="#ff3f00" stroke-width="1" />
<line x1="863" y1="793" x2="863" y2="815" stroke="#ff3f00" stroke-width="1" />
<line x1="868" y1="793" x2="868" y2="815" stroke="#ff3f00" stroke-width="1" />
<line x1="899" y1="793" x2="899" y2="815" stroke="#ff3f00" stroke-width="1" />
<line x1="715.3" y1="813.5" x2="746.3" y2="813.5" stroke="#ff3f00" stroke-width="1" />
<line x1="751.3" y1="813.5" x2="780.3" y2="813.5" stroke="#ff3f00" stroke-width="1" />
<line x1="780.3" y1="813.5" x2="834" y2="813.5" stroke="#ff3f00" stroke-width="1" />
<line x1="834" y1="813.5" x2="863" y2="813.5" stroke="#ff3f00" stroke-width="1" />
<line x1="868" y1="813.5" x2="899" y2="813.5" stroke="#ff3f00" stroke-width="1" />
<text x="730.8" y="811" font-size="8" fill="#ff3f00" font-weight="bold" textLength="8" lengthAdjust="spacingAndGlyphs" text-anchor="middle">44</text>
<text x="765.8" y="811" font-size="8" fill="#ff3f00" font-weight="bold" textLength="8" lengthAdjust="spacingAndGlyphs" text-anchor="middle">41</text>
<text x="807.6" y="811" font-size="8" fill="#ff3f00" font-weight="bold" textLength="12" lengthAdjust="spacingAndGlyphs" text-anchor="middle">221</text>
<text x="848.5" y="811" font-size="8" fill="#ff3f00" font-weight="bold" textLength="8" lengthAdjust="spacingAndGlyphs" text-anchor="middle">41</text>
<text x="883.5" y="811" font-size="8" fill="#ff3f00" font-weight="bold" textLength="8" lengthAdjust="spacingAndGlyphs" text-anchor="middle">44</text>
<line x1="700.3" y1="822.5" x2="914" y2="822.5" stroke="#ff3f00" stroke-width="1" />
<line x1="700.3" y1="793" x2="700.3" y2="825" stroke="#ff3f00" stroke-width="1" />
<line x1="914" y1="793" x2="914" y2="825" stroke="#ff3f00" stroke-width="1" />
<text x="807.6" y="820" font-size="8" fill="#ff3f00" font-weight="bold" textLength="12" lengthAdjust="spacingAndGlyphs" text-anchor="middle">848</text>
<text x="807.6" y="830" font-size="8" fill="#ff3f00" font-weight="bold" textLength="12" lengthAdjust="spacingAndGlyphs" text-anchor="middle">935</text>
<text x="807.6" y="840" font-size="8" fill="#ff3f00" font-weight="bold" textLength="16" lengthAdjust="spacingAndGlyphs" text-anchor="middle">1000</text>
<line x1="195" y1="832.5" x2="941" y2="832.5" stroke="#ff3f00" stroke-width="1" />
<line x1="195" y1="842.5" x2="941" y2="842.5" stroke="#ff3f00" stroke-width="1" />
<line x1="195" y1="852.5" x2="941" y2="852.5" stroke="#ff3f00" stroke-width="1" />
<line x1="195.3" y1="828" x2="195.3" y2="855" stroke="#ff3f00" stroke-width="1" />
<line x1="445.7" y1="828" x2="445.7" y2="855" stroke="#ff3f00" stroke-width="1" />
<line x1="690.6" y1="828" x2="690.6" y2="855" stroke="#ff3f00" stroke-width="1" />
<line x1="941" y1="828" x2="941" y2="855" stroke="#ff3f00" stroke-width="1" />
<text x="212.7" y="830" font-size="8" fill="#ff3f00" font-weight="bold" textLength="8" lengthAdjust="spacingAndGlyphs" text-anchor="middle">50</text>
<text x="445.7" y="830" font-size="8" fill="#ff3f00" font-weight="bold" textLength="8" lengthAdjust="spacingAndGlyphs" text-anchor="middle">50</text>
<text x="690.6" y="830" font-size="8" fill="#ff3f00" font-weight="bold" textLength="8" lengthAdjust="spacingAndGlyphs" text-anchor="middle">50</text>
<text x="923.5" y="830" font-size="8" fill="#ff3f00" font-weight="bold" textLength="8" lengthAdjust="spacingAndGlyphs" text-anchor="middle">50</text>
<text x="568.9" y="850" font-size="8" fill="#ff3f00" font-weight="bold" textLength="56" lengthAdjust="spacingAndGlyphs" text-anchor="middle">RAHMENMASS = 3200</text>
</g>
<g shape-rendering="crispEdges">
<line x1="1381.5" y1="821" x2="1381.5" y2="857" stroke="#000000" stroke-width="1.2" />
<line x1="1345" y1="856.5" x2="1417" y2="856.5" stroke="#000000" stroke-width="1.2" />
<rect x="1378.5" y="853.5" width="6.0" height="6.0" fill="none" stroke="#000000" stroke-width="1" />
</g>
<defs><filter id="psh" x="-20%" y="-40%" width="140%" height="180%"><feGaussianBlur stdDeviation="2.6"/></filter>
<linearGradient id="pfr" x1="0" y1="0" x2="0" y2="1"><stop offset="0" stop-color="#e9f1fa"/><stop offset="1" stop-color="#d3e1f0"/></linearGradient></defs>
<g shape-rendering="geometricPrecision">
<rect x="1137.5" y="111" width="296.0" height="83.5" rx="7" ry="7" fill="#000" fill-opacity="0.95" filter="url(#psh)"/>
<rect x="1138.5" y="111" width="294.0" height="81.5" rx="6" ry="6" fill="url(#pfr)" stroke="#3a3f48" stroke-width="1.2"/>
<rect x="1140.0" y="112.5" width="291.0" height="78.5" rx="5" ry="5" fill="none" stroke="#ffffff" stroke-opacity="0.8" stroke-width="1"/>
</g>
<rect x="1144.5" y="116.5" width="282" height="69.5" fill="#f0f0f0" stroke="#a6b4c6" stroke-width="1" />
<rect x="1146" y="118" width="279" height="16" fill="#99b4d1" stroke="none" stroke-width="1" />
<text x="1148" y="130.5" font-size="12.5" fill="#000" textLength="111" lengthAdjust="spacingAndGlyphs" >SYSCAD-Programme</text>
<rect x="1407.5" y="120.5" width="14" height="12" fill="#f0f0f0" stroke="#ffffff" stroke-width="1" />
<line x1="1421.5" y1="120" x2="1421.5" y2="133" stroke="#404040" stroke-width="1" />
<line x1="1407" y1="132.5" x2="1422" y2="132.5" stroke="#404040" stroke-width="1" />
<path d="M1410.5,123 L1417.5,130 M1417.5,123 L1410.5,130" stroke="#000" stroke-width="1.8" shape-rendering="geometricPrecision"/>
<g shape-rendering="geometricPrecision">
<rect x="1186" y="197.5" width="249" height="82.0" rx="7" ry="7" fill="#000" fill-opacity="0.95" filter="url(#psh)"/>
<rect x="1187" y="197.5" width="247" height="80.0" rx="6" ry="6" fill="url(#pfr)" stroke="#3a3f48" stroke-width="1.2"/>
<rect x="1188.5" y="199.0" width="244" height="77.0" rx="5" ry="5" fill="none" stroke="#ffffff" stroke-opacity="0.8" stroke-width="1"/>
</g>
<rect x="1192.5" y="202.5" width="236" height="68.5" fill="#f0f0f0" stroke="#a6b4c6" stroke-width="1" />
<rect x="1194" y="204" width="233" height="16" fill="#99b4d1" stroke="none" stroke-width="1" />
<text x="1196" y="216.5" font-size="12.5" fill="#000" textLength="81" lengthAdjust="spacingAndGlyphs" >SYSCAD-Dessin</text>
<rect x="1409.5" y="206.5" width="14" height="12" fill="#f0f0f0" stroke="#ffffff" stroke-width="1" />
<line x1="1423.5" y1="206" x2="1423.5" y2="219" stroke="#404040" stroke-width="1" />
<line x1="1409" y1="218.5" x2="1424" y2="218.5" stroke="#404040" stroke-width="1" />
<path d="M1412.5,209 L1419.5,216 M1419.5,209 L1412.5,216" stroke="#000" stroke-width="1.8" shape-rendering="geometricPrecision"/>
<g shape-rendering="geometricPrecision">
<rect x="1233" y="289" width="203.5" height="83" rx="7" ry="7" fill="#000" fill-opacity="0.95" filter="url(#psh)"/>
<rect x="1234" y="289" width="201.5" height="81" rx="6" ry="6" fill="url(#pfr)" stroke="#3a3f48" stroke-width="1.2"/>
<rect x="1235.5" y="290.5" width="198.5" height="78" rx="5" ry="5" fill="none" stroke="#ffffff" stroke-opacity="0.8" stroke-width="1"/>
</g>
<rect x="1239.0" y="294.0" width="191.0" height="69.5" fill="#f0f0f0" stroke="#a6b4c6" stroke-width="1" />
<rect x="1240.5" y="295.5" width="188.0" height="17.5" fill="#99b4d1" stroke="none" stroke-width="1" />
<text x="1242.5" y="309.5" font-size="12.5" fill="#000" textLength="128" lengthAdjust="spacingAndGlyphs" >SYSCAD-Environnement</text>
<rect x="1411.0" y="298.0" width="14" height="12" fill="#f0f0f0" stroke="#ffffff" stroke-width="1" />
<line x1="1425.0" y1="297.5" x2="1425.0" y2="310.5" stroke="#404040" stroke-width="1" />
<line x1="1410.5" y1="310.0" x2="1425.5" y2="310.0" stroke="#404040" stroke-width="1" />
<path d="M1414.0,300.5 L1421.0,307.5 M1421.0,300.5 L1414.0,307.5" stroke="#000" stroke-width="1.8" shape-rendering="geometricPrecision"/>
<g transform="translate(19,47)" shape-rendering="geometricPrecision"><path d="M1.5,1.5 H8.5 L11.5,4.5 V14.5 H1.5 Z" fill="#fff" stroke="#000" stroke-width="1.2"/><path d="M8.5,1.5 V4.5 H11.5" fill="none" stroke="#000"/></g>
<g transform="translate(39,47)" shape-rendering="geometricPrecision"><path d="M1,5 H5 L6,6.5 H11 V14 H1 Z" fill="#f4f07a" stroke="#000"/><path d="M1,14 L4,8.5 H16 L12,14 Z" fill="#8a8a10" stroke="#000"/><path d="M8,3 Q11,0 14,3 M13,1.5 L14,4 L11.5,4" fill="none" stroke="#000" stroke-width="1.2"/></g>
<g transform="translate(63,47)" shape-rendering="geometricPrecision"><rect x="0.5" y="0.5" width="13" height="14" fill="#808000" stroke="#000"/><rect x="3" y="1" width="8" height="5" fill="#e8e8e8"/><rect x="3" y="9" width="8" height="5.5" fill="#000"/><rect x="8" y="10" width="2" height="3" fill="#fff"/></g>
<g transform="translate(91,47)" shape-rendering="geometricPrecision"><path d="M3.5,1 H12.5 L13,5 H3 Z" fill="#fff" stroke="#000"/><path d="M0.5,6 H15.5 V13 H0.5 Z" fill="#a0a0a0" stroke="#000" stroke-width="1.2"/><rect x="2" y="7" width="12" height="2" fill="#707070"/><rect x="7" y="10" width="4" height="2" fill="#d4c800"/><rect x="1.5" y="13" width="13" height="2" fill="#e0e0e0" stroke="#000" stroke-width="0.8"/></g>
<g transform="translate(114,47)" shape-rendering="geometricPrecision"><path d="M0.5,1.5 H7.5 L10.5,4.5 V14.5 H0.5 Z" fill="#fff" stroke="#000" stroke-width="0.9"/><circle cx="9" cy="9.5" r="3.6" fill="#fff" stroke="#000" stroke-width="1.2"/><path d="M8,8 a1.6,1.6 0 0 1 1.8,-0.6" stroke="#00e0ff" stroke-width="1.3" fill="none"/><path d="M11.5,12 L14.5,15" stroke="#000080" stroke-width="2"/></g>
<g transform="translate(137,47)" shape-rendering="geometricPrecision"><circle cx="6.5" cy="6.5" r="5.6" fill="#fff" stroke="#000" stroke-width="1.3"/><text x="2.5" y="9" font-size="6.5" font-weight="bold" fill="#900000">ab</text><text x="11" y="9" font-size="6" font-weight="bold" fill="#c00000">c</text><path d="M10.5,11 L14.5,15" stroke="#000" stroke-width="2"/><path d="M12,12.5 L14.5,15" stroke="#900000" stroke-width="1.2"/></g>
<g transform="translate(166,47)" shape-rendering="geometricPrecision"><path d="M3,0 L7,10 M9,0 L5,10" stroke="#000" stroke-width="1.2"/><circle cx="3.5" cy="12.5" r="2.3" fill="none" stroke="#0000a0" stroke-width="1.3"/><circle cx="8.5" cy="12.5" r="2.3" fill="none" stroke="#0000a0" stroke-width="1.3"/></g>
<g transform="translate(189,47)" shape-rendering="geometricPrecision"><path d="M0.5,0.5 H6 L8,2.5 V10.5 H0.5 Z" fill="#fff" stroke="#000"/><rect x="2" y="4" width="4" height="1.2" fill="#808080"/><rect x="2" y="6.5" width="4" height="1.2" fill="#808080"/><path d="M6.5,4.5 H12 L14.5,7 V14.5 H6.5 Z" fill="#fff" stroke="#00008b" stroke-width="1.2"/><rect x="8" y="9" width="5" height="1.2" fill="#808080"/><rect x="8" y="11.5" width="5" height="1.2" fill="#808080"/></g>
<g transform="translate(212,47)" shape-rendering="geometricPrecision"><rect x="0.5" y="2" width="12" height="13" rx="1" fill="#807840" stroke="#000"/><path d="M4,0.5 H9 L10,3 H3 Z" fill="#f0e000" stroke="#000" stroke-width="0.8"/><path d="M6.5,8.5 H12 L15,11.5 V15.5 H6.5 Z" fill="#fff" stroke="#00008b" stroke-width="1.2"/><rect x="8" y="11" width="4" height="1.3" fill="#00008b"/></g>
<g transform="translate(242,47)" shape-rendering="geometricPrecision"><path d="M3,8 Q6,2 11,4 Q14,6 12,10" fill="none" stroke="#00008b" stroke-width="2"/><path d="M1,5 L1,11 L6,10 Z" fill="#00008b"/></g>
<g transform="translate(265,47)" shape-rendering="geometricPrecision"><path d="M13,8 Q10,2 5,4 Q2,6 4,10" fill="none" stroke="#00008b" stroke-width="2"/><path d="M15,5 L15,11 L10,10 Z" fill="#00008b"/></g>
<g transform="translate(293,47)" shape-rendering="geometricPrecision"><path d="M1,5 L7,2 L16,5 L9,8 Z" fill="#fff" stroke="#000"/><path d="M1,8 L9,11 L16,8" fill="none" stroke="#000"/><path d="M1,10 L9,13 L16,10 L9,14.5 Z" fill="#ffff40" stroke="#000"/><path d="M1,12 L3,16 L4,13 Z" fill="#000"/></g>
<g transform="translate(316,47)" shape-rendering="geometricPrecision"><path d="M1,5 L7,2 L16,5 L9,8 Z" fill="#fff" stroke="#000"/><path d="M1,8 L9,11 L16,8 M1,11 L9,14 L16,11 M1,13 L9,16 L16,13" fill="none" stroke="#000"/></g>
<g transform="translate(650,47)" shape-rendering="geometricPrecision"><rect x="0.5" y="1.5" width="12" height="14" fill="#fff" stroke="#000"/><rect x="0.5" y="1" width="12" height="2.5" fill="#000080"/><circle cx="4" cy="6.5" r="1.1" fill="#008080"/><circle cx="8" cy="6.5" r="1.1" fill="#0000ff"/><circle cx="4" cy="9.5" r="1.1" fill="#008080"/><circle cx="8" cy="9.5" r="1.1" fill="#008080"/><circle cx="4" cy="12.5" r="1.1" fill="#f00"/><circle cx="8" cy="12.5" r="1.1" fill="#008080"/><path d="M11,5 Q14,5 14,10" stroke="#0000c0" stroke-width="1.3" fill="none"/><rect x="13" y="12" width="2" height="2" fill="#00f"/></g>
<g transform="translate(680,47)" shape-rendering="geometricPrecision"><rect x="1" y="1" width="2.5" height="4" fill="#00f"/><rect x="3.5" y="1" width="2.5" height="4" fill="#f00"/><rect x="6" y="1" width="2.5" height="4" fill="#ff0"/><rect x="8.5" y="1" width="2.5" height="4" fill="#008000"/><text x="1" y="13" font-size="9" font-weight="bold" fill="#000">A</text><path d="M8,10 Q10,5 13,6 Q16,6 16,5 M9,11 Q12,9 16,9" stroke="#000" fill="none"/><rect x="1" y="14" width="2" height="2" fill="#000"/><rect x="4" y="14" width="2" height="2" fill="#000"/><rect x="7" y="14" width="2" height="2" fill="#000"/></g>
<g transform="translate(703,47)" shape-rendering="geometricPrecision"><path d="M14,1 L16,3 L10,9 L8,7 Z" fill="#900000" stroke="#600"/><path d="M8,7 L10,9 L8,11 L1,6 Q3,5 6,6 Z" fill="#000"/><path d="M8.5,7.5 L9.5,8.5" stroke="#fff" stroke-width="1.5"/><rect x="1" y="12" width="4" height="3" fill="#f00"/><rect x="5.5" y="12" width="4" height="3" fill="#ff0"/><rect x="10" y="12" width="4" height="3" fill="#00f"/></g>
<g transform="translate(731,47)" shape-rendering="geometricPrecision"><path d="M15,1 L17,3 L8,13 L5,11 Z" fill="#e8e000" stroke="#000" stroke-width="0.6"/><path d="M7,8 L10,11 L8,13 L5,11 Z" fill="#fff" stroke="#000" stroke-width="0.6"/><path d="M5,11 L8,13 L6.5,15 L3.5,13 Z" fill="#800080"/><path d="M0,14 h3 M11,14 h4" stroke="#000" stroke-width="1.6"/></g>
<g transform="translate(761,47)" shape-rendering="geometricPrecision"><circle cx="4" cy="4" r="3.3" fill="none" stroke="#000" stroke-width="1.1"/><circle cx="8.5" cy="9.5" r="3.3" fill="none" stroke="#000" stroke-width="1.1"/><path d="M9,1 L13,5 M13,2 v3 h-3" stroke="#000" fill="none"/><path d="M12,16 L16,12 L16,16 Z" fill="#000"/></g>
<g transform="translate(784,47)" shape-rendering="geometricPrecision"><path d="M6,2 L6,14 H1 Z M10,2 L10,14 H15 Z" fill="none" stroke="#000" stroke-width="1.2"/><path d="M8,0 V16" stroke="#c00000" stroke-width="1.2"/></g>
<g transform="translate(807,47)" shape-rendering="geometricPrecision"><path d="M2,13 Q0,13 0,10 Q0,7 3,7 Q4,3 8,3 Q12,3 13,7 Q16,7 16,10 Q16,13 14,13 Z" fill="#fff" stroke="#000" stroke-width="1.1"/><path d="M3,11.5 Q2,9 5,9 H7 V6 H9 V9 H11 Q14,9 13,11.5 Z" fill="none" stroke="#a00000" stroke-width="1.1"/></g>
<g transform="translate(831,47)" shape-rendering="geometricPrecision"><path d="M8,0 V16 M0,8 H16" stroke="#000" stroke-width="1.6"/><path d="M8,0 L5,3 H11 Z M8,16 L5,13 H11 Z M0,8 L3,5 V11 Z M16,8 L13,5 V11 Z" fill="#000"/><path d="M12,16 L16,12 L16,16 Z" fill="#000"/></g>
<g transform="translate(853,47)" shape-rendering="geometricPrecision"><path d="M4,4 A6,6 0 1 0 11,3" fill="none" stroke="#000" stroke-width="2.4"/><path d="M2,1 L7,1 L5,6 Z" fill="#000"/></g>
<g transform="translate(876,47)" shape-rendering="geometricPrecision"><path d="M0.5,2.5 H9 L15,14.5 H0.5 Z" fill="#fff" stroke="#000" stroke-width="1.1"/><path d="M9,2.5 L15,14.5 H9" fill="none" stroke="#a00000" stroke-width="1.1"/><path d="M9,3 V14" stroke="#000" stroke-dasharray="1,1"/></g>
<g transform="translate(900,47)" shape-rendering="geometricPrecision"><path d="M0.5,0.5 H12.5 V12.5 H6" fill="none" stroke="#a00000" stroke-width="1.2"/><path d="M0.5,0.5 V5" stroke="#a00000" stroke-width="1.2"/><rect x="0.5" y="6" width="6" height="6.5" fill="none" stroke="#000" stroke-dasharray="1,1"/></g>
<g transform="translate(923,47)" shape-rendering="geometricPrecision"><path d="M1,7 H8" stroke="#000" stroke-width="2"/><path d="M9,7 H15" stroke="#a00000" stroke-width="2" stroke-dasharray="2,1"/><path d="M4,14 L11,1" stroke="#000" stroke-width="1.1"/><path d="M12,16 L16,12 L16,16 Z" fill="#000"/></g>
<g transform="translate(951,47)" shape-rendering="geometricPrecision"><text x="0" y="14" font-size="15" font-weight="bold" font-style="italic" fill="#000">A</text><path d="M7,14 L14,3 L16,4 L9,15 Z" fill="#f0f000" stroke="#000" stroke-width="0.8"/><path d="M14,3 L16,4 L16.5,2" fill="#800080"/><path d="M12,16 L16,12 L16,16 Z" fill="#000"/></g>
<g transform="translate(974,47)" shape-rendering="geometricPrecision"><path d="M1,2 h14" stroke="#a00000" stroke-dasharray="1,1"/><circle cx="2" cy="2" r="1.6" fill="#000"/><circle cx="14" cy="2" r="1.6" fill="#000"/><rect x="0.5" y="7.5" width="15" height="5" fill="#ffff00" stroke="#000" stroke-width="1.2"/><path d="M3,7.5 v2 M6,7.5 v2 M9,7.5 v2 M12,7.5 v2" stroke="#000"/></g>
<g transform="translate(996,47)" shape-rendering="geometricPrecision"><path d="M2,13 Q0,12 1,9 Q0,5 4,4 Q6,1 10,2 Q14,2 15,6 Q17,9 15,12 Q13,15 9,14 Q5,15 2,13 Z" fill="#e8ecf4" stroke="#b0b8c8"/><text x="5" y="12" font-size="10" font-weight="bold" fill="#1040a0">?</text></g>
<g transform="translate(1020,47)" shape-rendering="geometricPrecision"><path d="M1,14 L11,5 L13,7 L3,16 Z" fill="#d00000" stroke="#600"/><path d="M12,5 L15,1 M13,4 l3,0 M12,3 v-3" stroke="#f00" stroke-width="0.9"/></g>
<g transform="translate(348,47)" shape-rendering="geometricPrecision"><circle cx="5" cy="5.5" r="4.2" fill="#ffff90" stroke="#606000"/><rect x="3" y="10" width="4" height="4" fill="#8080c0" stroke="#404080" stroke-width="0.6"/></g>
<g transform="translate(362,47)" shape-rendering="geometricPrecision"><circle cx="7" cy="7.5" r="6" fill="#f0dc40" stroke="#2060c0" stroke-width="1.2"/><circle cx="5.5" cy="5.5" r="2.5" fill="#fff8b0"/></g>
<g transform="translate(380,47)" shape-rendering="geometricPrecision"><circle cx="6" cy="5.5" r="5" fill="#a8c0e0" stroke="#6080b0"/><circle cx="6" cy="5.5" r="2" fill="#e0e8f0"/><rect x="6.5" y="7.5" width="7" height="6.5" fill="#fff" stroke="#6080b0"/></g>
<g transform="translate(397,47)" shape-rendering="geometricPrecision"><path d="M2,9 V4 Q2,0 6,0 Q10,0 10,4" fill="none" stroke="#b0a000" stroke-width="2"/><rect x="5" y="6" width="9" height="9" rx="1" fill="#f0e060" stroke="#807000"/><path d="M5,9 h9 M5,12 h9" stroke="#a09000"/></g>
<g transform="translate(412,47)" shape-rendering="geometricPrecision"><rect x="1" y="3" width="10" height="10" fill="#000"/></g>
<g transform="translate(22,73)" shape-rendering="geometricPrecision"><circle cx="6.5" cy="6.5" r="5.6" fill="none" stroke="#000" stroke-width="1.4"/><path d="M4.5,3.5 H7.5 L9,5 V9.5 H4.5 Z" fill="none" stroke="#a00000"/><path d="M12,16 L16,12 L16,16 Z" fill="#000"/></g>
<g transform="translate(45,73)" shape-rendering="geometricPrecision"><circle cx="6.5" cy="6.5" r="5.6" fill="none" stroke="#000" stroke-width="1.4"/><rect x="3.5" y="4.5" width="6" height="4" fill="none" stroke="#808080"/><path d="M2,9 h3 M3.5,7.5 v3 M9,3 h3 M10.5,1.5 v3" stroke="#a00000" stroke-width="1.2"/><path d="M10.5,10.5 L14.5,14.5" stroke="#000" stroke-width="2.2"/></g>
<g transform="translate(67,73)" shape-rendering="geometricPrecision"><circle cx="6.5" cy="6.5" r="5.6" fill="none" stroke="#000" stroke-width="1.4"/><path d="M3,10 L9,4 L7,3 H11 V7 L10,5" fill="#000" stroke="#000"/><path d="M10.5,10.5 L14.5,14.5" stroke="#000" stroke-width="2.2"/></g>
<g transform="translate(97,73)" shape-rendering="geometricPrecision"><text x="0" y="9" font-size="8.5" font-weight="bold" fill="#000" textLength="15" lengthAdjust="spacingAndGlyphs">REF.</text><circle cx="6.5" cy="13.5" r="1.8" fill="#d00000"/></g>
<g transform="translate(120,73)" shape-rendering="geometricPrecision"><path d="M3,13 L12,4" stroke="#000" stroke-width="1.1"/><circle cx="2.5" cy="13.5" r="2" fill="#fff" stroke="#a00000" stroke-width="1.2"/><circle cx="12.5" cy="3.5" r="2" fill="#fff" stroke="#a00000" stroke-width="1.2"/></g>
<g transform="translate(144,73)" shape-rendering="geometricPrecision"><path d="M1,1 L15,15 M15,1 L1,15" stroke="#000" stroke-width="1.1"/><circle cx="8" cy="8" r="2" fill="#fff" stroke="#a00000" stroke-width="1.2"/></g>
<g transform="translate(166,73)" shape-rendering="geometricPrecision"><path d="M1,15 L15,1" stroke="#000" stroke-width="1.1"/><circle cx="8" cy="8" r="1.8" fill="#fff" stroke="#a00000" stroke-width="1.2"/></g>
<g transform="translate(189,73)" shape-rendering="geometricPrecision"><path d="M1.5,3 V14 M13.5,5 V14" stroke="#000" stroke-width="1.1"/><circle cx="7" cy="3" r="1.6" fill="#fff" stroke="#a00000" stroke-width="1.1"/></g>
<g transform="translate(212,73)" shape-rendering="geometricPrecision"><path d="M1,3 H7 M12,8 V15" stroke="#000" stroke-width="1.1"/><circle cx="12" cy="4" r="1.6" fill="#fff" stroke="#a00000" stroke-width="1.1"/></g>
<g transform="translate(235,73)" shape-rendering="geometricPrecision"><path d="M1,13 H15 M8,3 V13" stroke="#000" stroke-width="1.2"/><circle cx="8" cy="13" r="1.6" fill="#fff" stroke="#a00000" stroke-width="1.1"/></g>
<g transform="translate(258,73)" shape-rendering="geometricPrecision"><circle cx="7.5" cy="7.5" r="6.5" fill="none" stroke="#000" stroke-width="1.2"/><circle cx="7.5" cy="7.5" r="1.6" fill="none" stroke="#a00000" stroke-width="1.1"/><path d="M12,16 L16,12 L16,16 Z" fill="#000"/></g>
<g transform="translate(281,73)" shape-rendering="geometricPrecision"><rect x="1" y="1" width="10" height="8" fill="#ffff60" stroke="#000"/><circle cx="10" cy="10" r="4" fill="#f0e040" stroke="#000"/><circle cx="2" cy="10" r="1.5" fill="#fff" stroke="#a00000"/></g>
<g transform="translate(304,73)" shape-rendering="geometricPrecision"><path d="M3,12 V6 Q3,1 8,1 Q13,1 13,6 V12 H10 V6 Q10,4 8,4 Q6,4 6,6 V12 Z" fill="#900000" stroke="#600"/><circle cx="14" cy="14" r="1.6" fill="#fff" stroke="#a00000"/></g>
<g transform="translate(327,73)" shape-rendering="geometricPrecision"><path d="M2,14 L14,2 M5,3 L14,12" stroke="#000" stroke-width="1.1"/><rect x="7" y="5" width="4" height="4" fill="#fff" stroke="#a00000"/><text x="1" y="8" font-size="6" fill="#008000" font-weight="bold">1</text><circle cx="2.5" cy="14" r="1.7" fill="#fff" stroke="#a00000"/><path d="M12,16 L16,12 L16,16 Z" fill="#000"/></g>
<g transform="translate(355,73)" shape-rendering="geometricPrecision"><rect x="1.5" y="3.5" width="13" height="8" fill="none" stroke="#000" stroke-width="1.3"/><circle cx="1.5" cy="11.5" r="1.5" fill="#a00000"/><circle cx="14.5" cy="3.5" r="1.5" fill="#a00000"/></g>
<g transform="translate(377,73)" shape-rendering="geometricPrecision"><circle cx="8" cy="8" r="6.5" fill="none" stroke="#000" stroke-width="1.2"/><path d="M6,10 L10,6" stroke="#a00000" stroke-width="1.2"/><circle cx="6" cy="10" r="1.2" fill="#a00000"/></g>
<g transform="translate(401,73)" shape-rendering="geometricPrecision"><path d="M8,1.5 L15,6.5 L12.5,14 H3.5 L1,6.5 Z" fill="none" stroke="#000" stroke-width="1.2"/></g>
<g transform="translate(424,73)" shape-rendering="geometricPrecision"><ellipse cx="8" cy="8" rx="7.5" ry="4.5" fill="none" stroke="#000" stroke-width="1.2"/><circle cx="8" cy="8" r="1" fill="#a00000"/><circle cx="15" cy="8" r="1.2" fill="#a00000"/><circle cx="8" cy="3.5" r="1.2" fill="#a00000"/></g>
<g transform="translate(447,73)" shape-rendering="geometricPrecision"><path d="M2,14 L14,2" stroke="#000" stroke-width="1.2"/><circle cx="2" cy="14" r="1.8" fill="#a00000"/><circle cx="14" cy="2" r="1.8" fill="#a00000"/></g>
<g transform="translate(470,73)" shape-rendering="geometricPrecision"><path d="M2,11 H9 Q14,11 14,7 Q14,3 9,3 H7" fill="none" stroke="#000" stroke-width="1.2"/><circle cx="2" cy="11" r="1.8" fill="#a00000"/><circle cx="8" cy="11" r="1.5" fill="#a00000"/><circle cx="7" cy="3" r="1.5" fill="#a00000"/></g>
<g transform="translate(493,73)" shape-rendering="geometricPrecision"><path d="M1,12 L12,1 M4,15 L15,4" stroke="#000" stroke-width="1.1"/><path d="M3,11 L11,3" stroke="#000" stroke-dasharray="1,1"/><circle cx="3" cy="12" r="1.6" fill="#a00000"/><circle cx="12" cy="4" r="1.6" fill="#a00000"/></g>
<g transform="translate(516,73)" shape-rendering="geometricPrecision"><path d="M1,12 Q4,2 8,8 Q12,14 15,5" fill="none" stroke="#000" stroke-width="1.2"/></g>
<g transform="translate(539,73)" shape-rendering="geometricPrecision"><path d="M2,14 Q4,4 13,2" fill="none" stroke="#000" stroke-width="1.2"/><circle cx="2.5" cy="13.5" r="2" fill="#a00000"/><circle cx="7" cy="6" r="1.5" fill="#a00000"/><circle cx="14" cy="2" r="1.5" fill="#a00000"/></g>
<g transform="translate(561,73)" shape-rendering="geometricPrecision"><text x="0" y="15" style="font-family:&quot;Liberation Serif&quot;" font-size="17" font-weight="bold" fill="#000">A</text></g>
<g transform="translate(585,73)" shape-rendering="geometricPrecision"><rect x="3" y="3" width="10" height="10" fill="#a00000"/><path d="M3,6 L6,3 M3,9 L9,3 M3,12 L12,3 M5,13 L13,5 M8,13 L13,8" stroke="#fff" stroke-width="1"/><path d="M3,0 V16 M13,0 V16 M0,3 H16 M0,13 H16" stroke="#000" stroke-width="1.2"/></g>
<g transform="translate(4,110)" shape-rendering="geometricPrecision"><rect x="1" y="1" width="12" height="13" fill="#000"/><path d="M3,12 L11,3 V12 Z" fill="none" stroke="#ff0" stroke-width="1.2"/><path d="M1,9 H13 M7,4 V14" stroke="#0f0" stroke-width="1.2"/><rect x="14" y="1" width="2" height="13" fill="#00f"/><rect x="1" y="14" width="15" height="1.5" fill="#00f"/></g>
<g transform="translate(4,131)" shape-rendering="geometricPrecision"><rect x="1" y="1" width="14" height="14" fill="#c0c0c0"/><path d="M1,5.5 H15 M1,10 H15 M5.5,1 V15 M10,1 V15" stroke="#909090"/><path d="M5,4 L14,13" stroke="#000" stroke-width="2.6"/><path d="M2,1 L6,4" stroke="#ff0" stroke-width="2"/></g>
<g transform="translate(4,153)" shape-rendering="geometricPrecision"><rect x="1" y="1" width="13" height="13" fill="#fff" stroke="#4040ff"/><path d="M1,5.5 H14 M1,10 H14 M5.5,1 V14 M10,1 V14" stroke="#4040ff"/><path d="M3,13 L12,4 L14,6 L5,14 Z" fill="#e08020" stroke="#000" stroke-width="0.7"/><path d="M12,16 L16,12 L16,16 Z" fill="#000"/></g>
<g transform="translate(4,175)" shape-rendering="geometricPrecision"><rect x="1" y="1" width="13" height="13" fill="none" stroke="#000" stroke-width="1.3"/><rect x="3.5" y="3.5" width="8" height="8" fill="none" stroke="#000" stroke-width="1.1"/><text x="5" y="10.5" font-size="7" fill="#000" font-weight="bold">R</text><path d="M12,16 L16,12 L16,16 Z" fill="#000"/></g>
<g transform="translate(4,197)" shape-rendering="geometricPrecision"><ellipse cx="8" cy="8" rx="6.5" ry="6" fill="none" stroke="#000" stroke-width="1.1"/><path d="M1,13 L14,2 M3,5 L12,13" stroke="#000"/><path d="M4,6 L11,11" stroke="#f00" stroke-width="1.6"/><path d="M5,5 L9,2 M7,13 L11,10" stroke="#fff" stroke-width="1.5"/><path d="M12,16 L16,12 L16,16 Z" fill="#000"/></g>
<g transform="translate(4,219)" shape-rendering="geometricPrecision"><path d="M4,6 L10,1 L16,6 L10,12 Z" fill="#20c0c0" stroke="#000"/><path d="M4,6 Q1,8 1,10 Q1,12 3,11" fill="none" stroke="#00f" stroke-width="1.6"/><path d="M12,16 L16,12 L16,16 Z" fill="#000"/></g>
<g transform="translate(4,242)" shape-rendering="geometricPrecision"><path d="M2,8 L8,2 L14,8" fill="none" stroke="#000" stroke-width="1.5"/><path d="M6,5 H11 V8" fill="none" stroke="#000" stroke-width="1.2"/><rect x="1" y="9" width="14" height="1.6" fill="#d00000"/><path d="M3,10 V15 M6,10 V15 M9,10 V15 M12,10 V15" stroke="#d00000" stroke-width="1.2"/><rect x="1" y="13.5" width="14" height="1.2" fill="#d00000"/><path d="M12,16 L16,12 L16,16 Z" fill="#000"/></g>
<g transform="translate(4,270)" shape-rendering="geometricPrecision"><path d="M2,5 Q4,1 9,2 L15,8 Q14,14 9,15 L2,9 Z" fill="#a0a8b0" stroke="#404040"/><path d="M8,5 L14,9 L11,14 L5,10 Z" fill="#20b0c0"/><rect x="6" y="8" width="3" height="3" fill="#fff" transform="rotate(30 7 9)"/><path d="M12,16 L16,12 L16,16 Z" fill="#000"/></g>
<g transform="translate(4,298)" shape-rendering="geometricPrecision"><path d="M1,4 L4,1 H13 V11 L10,14 H1 Z" fill="#ffff80" stroke="#000"/><path d="M1,4 H10 V14 M10,4 L13,1" fill="none" stroke="#000"/><path d="M12,16 L16,12 L16,16 Z" fill="#000"/></g>
<g transform="translate(4,320)" shape-rendering="geometricPrecision"><rect x="1" y="1" width="14" height="14" fill="#c00000"/><path d="M1,5.5 H15 M1,10 H15 M5,1 V5.5 M11,1 V5.5 M8,5.5 V10 M4,10 V15 M12,10 V15" stroke="#fff" stroke-width="1.3"/><path d="M12,16 L16,12 L16,16 Z" fill="#000"/></g>
<g transform="translate(4,342)" shape-rendering="geometricPrecision"><path d="M1,13 L11,3 L14,6 L4,15 Z" fill="#c0c0c0" stroke="#000"/><path d="M11,1 L15,5 L13,7 L9,3 Z" fill="#d00000" stroke="#000" stroke-width="0.6"/><path d="M3,12 L11,4" stroke="#000" stroke-dasharray="1,1"/><path d="M12,16 L16,12 L16,16 Z" fill="#000"/></g>
<g transform="translate(4,365)" shape-rendering="geometricPrecision"><path d="M1,7 V14 M3,7 V14" stroke="#404040" stroke-width="1.4"/><rect x="6" y="2" width="3" height="6" fill="#d00000"/><rect x="6" y="8" width="3" height="6" fill="#0000c0"/><path d="M9,14 L15,6 L15,12 Z" fill="#ffff00" stroke="#000" stroke-width="0.6"/><path d="M12,16 L16,12 L16,16 Z" fill="#000"/></g>
<g transform="translate(4,386)" shape-rendering="geometricPrecision"><rect x="1" y="1" width="14" height="14" fill="#707070"/><path d="M9,2 Q4,3 4,8 Q5,12 10,12" fill="none" stroke="#fff" stroke-width="1.6"/><path d="M8,6 h3" stroke="#fff"/><path d="M12,16 L16,12 L16,16 Z" fill="#000"/></g>
<g transform="translate(4,408)" shape-rendering="geometricPrecision"><path d="M4,1 H11 V6 H13 V14 H10 V9 H6 V15 H3 V6 Z" fill="#202020"/><rect x="5" y="4" width="6" height="6" fill="#ffff00"/><circle cx="13" cy="8" r="2.5" fill="#ffff00" stroke="#000"/></g>
<g transform="translate(4,430)" shape-rendering="geometricPrecision"><path d="M2.5,1.5 H12.5 L14.5,3.5 V14.5 H2.5 Z" fill="#fff" stroke="#000" stroke-width="1.1"/><path d="M4.5,5 H12 M4.5,7.5 H12 M4.5,10 H12 M4.5,12.5 H10" stroke="#000"/><path d="M12,16 L16,12 L16,16 Z" fill="#000"/></g>
<g transform="translate(4,452)" shape-rendering="geometricPrecision"><path d="M1,6 L5,2 H12 V13 L8,15 H1 Z" fill="#a0a0a0" stroke="#000"/><circle cx="11" cy="9" r="3.5" fill="#707070" stroke="#000"/><rect x="9" y="6" width="2.5" height="5" fill="#f00"/><path d="M12,16 L16,12 L16,16 Z" fill="#000"/></g>
<g transform="translate(4,493)" shape-rendering="geometricPrecision"><rect x="1" y="1" width="14" height="14" fill="#0000e0" stroke="#000080"/><path d="M1,7 H15 M8,1 V15" stroke="#fff" stroke-width="1"/><path d="M10,3 h3 M3,10 h3 M10,11 h4" stroke="#80c0ff" stroke-width="1.5"/></g>
<g transform="translate(1150,141)" shape-rendering="geometricPrecision"><path d="M1,2 H8 M4,2 V15" stroke="#000" stroke-width="1.4"/><rect x="3" y="4" width="2" height="11" fill="#ff0" stroke="#000" stroke-width="0.5"/><rect x="11" y="1" width="2.5" height="7" fill="#d00000"/><path d="M12.2,8 V15" stroke="#606060" stroke-width="1.2"/></g>
<g transform="translate(1173.7,141)" shape-rendering="geometricPrecision"><path d="M6.5,1.5 H13 L15,3.5 V13.5 H6.5 Z" fill="#fff" stroke="#000" stroke-width="1.2"/><rect x="1.5" y="6.5" width="8" height="6" fill="#ffff60" stroke="#000" stroke-width="1.1"/><circle cx="9" cy="12" r="3" fill="#ffff60" stroke="#000"/></g>
<g transform="translate(1196.3,141)" shape-rendering="geometricPrecision"><rect x="2" y="0" width="7" height="7" fill="#804020"/><circle cx="5.5" cy="3.5" r="2.3" fill="#c0c0c0" stroke="#000" stroke-width="0.6"/><path d="M5,9 H9 L14,11 L9,13 H5" fill="#00a000" stroke="#000" stroke-width="0.8"/><path d="M2,10 h3 M2,12 h3" stroke="#000"/></g>
<g transform="translate(1218.9,141)" shape-rendering="geometricPrecision"><rect x="0" y="0" width="16" height="16" fill="#b0b0b0"/><circle cx="3.5" cy="5" r="3" fill="#00e0e0"/><circle cx="12.5" cy="5" r="3" fill="#00e0e0"/><path d="M7,3 H9 V9 H7 Z M3,10 H13 V15 H3 Z" fill="#fff"/><path d="M5,12 H11" stroke="#b0b0b0"/></g>
<g transform="translate(1242.6,141)" shape-rendering="geometricPrecision"><path d="M0,4 L4,2 L8,8 L12,2 L16,4 L11,11 V16 H5 V11 Z" fill="#e00000" stroke="#000" stroke-width="0.8"/><path d="M7,1 h2 v5 h-2 z" fill="#000"/><circle cx="8" cy="3" r="1.5" fill="#0000c0"/></g>
<g transform="translate(1265.2,141)" shape-rendering="geometricPrecision"><rect x="0.5" y="0.5" width="15" height="15" fill="#00c0c0" stroke="#000"/><path d="M2,14 Q3,4 8,3 Q13,4 14,14 Z" fill="#a0a0a0"/><circle cx="6" cy="10" r="2" fill="#ffff60" stroke="#000" stroke-width="0.6"/><circle cx="10" cy="10" r="2" fill="#ffff60" stroke="#000" stroke-width="0.6"/><rect x="1" y="13" width="14" height="2" fill="#40b040"/><path d="M12,16 L16,12 L16,16 Z" fill="#000"/></g>
<g transform="translate(1287.8,141)" shape-rendering="geometricPrecision"><path d="M0,6 L5,1 L11,7 L6,13 Z" fill="#00c000" stroke="#000"/><rect x="8" y="4" width="7" height="11" fill="#fff" stroke="#000" stroke-width="1.1"/><rect x="3" y="12" width="5" height="3" fill="#000"/></g>
<g transform="translate(1311,141)" shape-rendering="geometricPrecision"><path d="M5,2 L10,1 L12,5 M13,7 L13,13 L10,12 M2,13 H8" stroke="#e00000" stroke-width="2" fill="none"/><path d="M4,9 L8,5 V11 Z" fill="#0000e0"/><path d="M8,10 L12,14 H8 Z" fill="#0000e0"/><rect x="4" y="1" width="3" height="3" fill="#ff0"/></g>
<g transform="translate(1334,141)" shape-rendering="geometricPrecision"><rect x="1.5" y="4.5" width="8" height="7" fill="#fff" stroke="#000" stroke-width="1.3"/><rect x="9.5" y="0.5" width="5" height="5" fill="#fff" stroke="#000" stroke-width="1.2"/><path d="M3,12 V15 M6,12 V15 M11,8 V11" stroke="#000" stroke-width="1.2"/><path d="M12,16 L16,12 L16,16 Z" fill="#000"/></g>
<g transform="translate(1356.7,141)" shape-rendering="geometricPrecision"><text x="0" y="12" font-size="12" font-weight="bold" fill="#202020" textLength="12" lengthAdjust="spacingAndGlyphs">W</text><rect x="1" y="13" width="15" height="2" fill="#000"/><path d="M12,4 V13" stroke="#000" stroke-width="1.5"/><circle cx="13" cy="11" r="1.4" fill="#a0a0a0"/></g>
<g transform="translate(1380,141)" shape-rendering="geometricPrecision"><rect x="1.5" y="1.5" width="13" height="13" fill="#e0e0e0"/><path d="M1,3 H14 M1,6 H14 M1,11 H14 M1,14 H14" stroke="#20a0a0" stroke-width="1.4"/><path d="M1.5,1 V15" stroke="#000080" stroke-dasharray="1,1"/><circle cx="12" cy="8.5" r="1.6" fill="#909090"/></g>
<g transform="translate(1403,141)" shape-rendering="geometricPrecision"><rect x="0.5" y="0.5" width="15" height="15" fill="#c00000" stroke="#000"/><path d="M1,5 h4 M11,5 h4 M1,10 h3 M12,10 h3 M3,1 v4 M13,10 v5" stroke="#fff"/><text x="4" y="13" font-size="12" font-weight="bold" fill="#f0f000" stroke="#000" stroke-width="0.4">?</text></g>
<g transform="translate(1150,163)" shape-rendering="geometricPrecision"><path d="M1,4 L5,0 L8,3 L15,9 L10,14 H3 Z" fill="#fff"/><path d="M0,3 L4,0 L10,5 L7,8 Z" fill="#e00000" stroke="#000" stroke-width="0.7"/><path d="M6,8 L12,6 L15,9 L10,12 Z" fill="#000"/><path d="M2,15 H15" stroke="#606060" stroke-width="1.5"/><path d="M1,6 V15" stroke="#000"/></g>
<g transform="translate(1173.7,163)" shape-rendering="geometricPrecision"><text x="0" y="6" font-size="6.5" font-weight="bold" fill="#800080" textLength="16" lengthAdjust="spacingAndGlyphs">USER</text><path d="M8,8 L3,14 M8,8 L13,14 M5,11 L11,11 M8,8 V10" stroke="#0000e0" stroke-width="1.6" fill="none"/><path d="M3,14 v2 M13,14 v2" stroke="#ff0" stroke-width="1.4"/></g>
<g transform="translate(1196.3,163)" shape-rendering="geometricPrecision"><rect x="1" y="1" width="11" height="4" fill="#00a0a0" stroke="#000"/><rect x="2" y="9" width="11" height="4" fill="#00a0a0" stroke="#000"/><path d="M8,5 V16 M10,5 V16" stroke="#ff0" stroke-width="1.2"/><path d="M12,2 Q15,3 15,6" stroke="#2060c0" stroke-width="1.3" fill="none"/><path d="M12,16 L16,12 L16,16 Z" fill="#000"/></g>
<g transform="translate(1218.9,163)" shape-rendering="geometricPrecision"><rect x="0.5" y="0.5" width="4" height="5" fill="#fff" stroke="#000" stroke-width="1.2"/><rect x="3.5" y="3.5" width="5" height="5" fill="none" stroke="#f0a000" stroke-width="1.2"/><rect x="8.5" y="9.5" width="7" height="6" fill="#fff" stroke="#e00000" stroke-width="1.2"/><path d="M9,3 Q12,4 12,8" stroke="#0000e0" stroke-width="1.4" fill="none"/><path d="M12,16 L16,12 L16,16 Z" fill="#000"/></g>
<g transform="translate(1242.6,163)" shape-rendering="geometricPrecision"><path d="M1,10 Q1,6 5,6 H10 L12,10 V14 H1 Z" fill="#606060" stroke="#000"/><rect x="4" y="2" width="5" height="5" fill="#fff" stroke="#000" stroke-width="0.6"/><path d="M6,12 L14,2 L16,4 L9,13 Z" fill="#800080" stroke="#000" stroke-width="0.6"/><path d="M12,5 L15,1 L16,3 Z" fill="#d0d000"/></g>
<g transform="translate(1265.2,163)" shape-rendering="geometricPrecision"><text x="4" y="6" font-size="6.5" font-weight="bold" fill="#000" textLength="11" lengthAdjust="spacingAndGlyphs">ARX</text><path d="M2,15 V10 Q2,7 6,7 H15" fill="none" stroke="#0000e0" stroke-width="1.6"/><path d="M0,11 L2,9 L4,11" fill="#0000e0"/><path d="M12,16 L16,12 L16,16 Z" fill="#000"/></g>
<g transform="translate(1287.8,163)" shape-rendering="geometricPrecision"><path d="M2.5,1.5 H9 L12.5,5 V14 H2.5 Z" fill="#fff" stroke="#000"/><rect x="3" y="3" width="6" height="4" fill="#4060e0"/><text x="0" y="15" font-size="7" font-weight="bold" fill="#000" textLength="12" lengthAdjust="spacingAndGlyphs">INF</text><path d="M12,16 L16,12 L16,16 Z" fill="#000"/></g>
<g transform="translate(1311,163)" shape-rendering="geometricPrecision"><rect x="0.5" y="1.5" width="12" height="14" fill="#fff" stroke="#000"/><rect x="0.5" y="1" width="12" height="2" fill="#000080"/><path d="M3,5 V14 M8,5 V14" stroke="#000" stroke-width="1.6" stroke-dasharray="1,1"/><rect x="8" y="12" width="3" height="3" fill="#e000e0"/><path d="M12,5 Q15,6 15,10" stroke="#e00000" stroke-width="1.4" fill="none"/><rect x="14" y="13" width="2" height="2" fill="#e000e0"/></g>
<g transform="translate(1334,163)" shape-rendering="geometricPrecision"><path d="M1,16 V1 H16 M3,16 V4 H14" fill="none" stroke="#000" stroke-width="1.3"/><rect x="4" y="5" width="10" height="10" fill="#fff"/><path d="M6,9 L8,12 L13,7" stroke="#000" stroke-width="2" fill="none"/></g>
<g transform="translate(1356.7,163)" shape-rendering="geometricPrecision"><circle cx="8" cy="8" r="7.3" fill="#ff4040" stroke="#000" stroke-width="1.2"/><circle cx="8" cy="8" r="3" fill="#e00000" stroke="#000"/><path d="M8,1 V15 M1,8 H15" stroke="#000" stroke-width="0.8"/></g>
<g transform="translate(1380,163)" shape-rendering="geometricPrecision"><path d="M1,4 L4,1 H15 V12 L12,15 H1 Z" fill="#000"/><rect x="2" y="5" width="2.5" height="2.5" fill="#0ff"/><rect x="5.5" y="5" width="2.5" height="2.5" fill="#f00"/><rect x="9" y="5" width="2.5" height="2.5" fill="#fff"/><rect x="2" y="8.5" width="2.5" height="2.5" fill="#f0f"/><rect x="5.5" y="8.5" width="2.5" height="2.5" fill="#0f0"/><rect x="9" y="8.5" width="2.5" height="2.5" fill="#fff"/><rect x="2" y="12" width="2.5" height="2.5" fill="#ff0"/><rect x="5.5" y="12" width="2.5" height="2.5" fill="#00f"/><rect x="9" y="12" width="2.5" height="2.5" fill="#f00"/><path d="M4,2 H14 M13,4 V12" stroke="#40c0ff" stroke-width="1.2"/></g>
<g transform="translate(1197.8,226)" shape-rendering="geometricPrecision"><rect x="2.5" y="0.5" width="11" height="15" fill="#fff" stroke="#000" stroke-width="1.2"/><rect x="4.5" y="2.5" width="7" height="4.5" fill="#f0f080" stroke="#000"/><rect x="4.5" y="9" width="7" height="4.5" fill="#f0f080" stroke="#000"/></g>
<g transform="translate(1220.6,226)" shape-rendering="geometricPrecision"><path d="M1,14 L11,2 L14,5 L4,15 Z" fill="#e0a040" stroke="#404040"/><path d="M1,14 L3,12 L4,15 Z" fill="#000"/><path d="M0,15.5 H10" stroke="#606060"/><path d="M12,16 L16,12 L16,16 Z" fill="#000"/></g>
<g transform="translate(1243.6,226)" shape-rendering="geometricPrecision"><text x="1" y="11" font-size="12" fill="#000" style="font-family:&quot;Liberation Serif&quot;">A</text><rect x="1" y="13" width="4" height="3" fill="#e00000"/><rect x="5.5" y="13" width="4" height="3" fill="#f0f000"/><rect x="10" y="13" width="4" height="3" fill="#0000e0"/></g>
<g transform="translate(1266.2,226)" shape-rendering="geometricPrecision"><rect x="5" y="3" width="10" height="12" fill="#c0c0c0" stroke="#404040"/><path d="M2,6 Q2,1 6,1 Q10,1 10,6 M6,6 V14" stroke="#e00000" stroke-width="2" fill="none"/><path d="M12,16 L16,12 L16,16 Z" fill="#000"/></g>
<g transform="translate(1290,226)" shape-rendering="geometricPrecision"><text x="1" y="10" font-size="10" font-weight="bold" fill="#0000e0">F</text><path d="M7,12 L13,2 L15,3 L9,13 Z" fill="#fff" stroke="#000"/><path d="M1,14 H14" stroke="#000" stroke-width="1.5"/></g>
<g transform="translate(1312.5,226)" shape-rendering="geometricPrecision"><path d="M7,11 L13,2 L15,3 L9,12 Z" fill="#fff" stroke="#000"/><path d="M13,2 L15,3 L16,1 Z" fill="#e000e0"/><path d="M3,7 L8,10 M4,9 L7,8" stroke="#20a0a0" stroke-width="1.5"/><path d="M1,14 Q7,11 15,14" stroke="#000" fill="none" stroke-width="1.3"/></g>
<g transform="translate(1335,226)" shape-rendering="geometricPrecision"><ellipse cx="8" cy="6" rx="7.5" ry="5.5" fill="#ffff80" stroke="#000" stroke-width="1.2"/><text x="2.5" y="8.5" font-size="6" font-weight="bold" fill="#000" textLength="11" lengthAdjust="spacingAndGlyphs">SSX</text><path d="M5,11 L4,15 L8,11" fill="#ffff80" stroke="#000"/></g>
<g transform="translate(1358.8,226)" shape-rendering="geometricPrecision"><path d="M2,3 V14 H15" fill="none" stroke="#000" stroke-width="1.3"/><path d="M0,4 L2,1 L4,4 Z" fill="#000"/><text x="6" y="10" font-size="8.5" font-weight="bold" fill="#e00000" textLength="9" lengthAdjust="spacingAndGlyphs">Jx</text><path d="M12,16 L16,12 L16,16 Z" fill="#000"/></g>
<g transform="translate(1381.4,226)" shape-rendering="geometricPrecision"><rect x="1.5" y="2.5" width="13" height="11" fill="#fff" stroke="#909090"/><path d="M4,4 V11 M7,10 H10" stroke="#909090"/></g>
<g transform="translate(1405,226)" shape-rendering="geometricPrecision"><path d="M2,14 L14,2" stroke="#a00000" stroke-dasharray="1.5,1"/><circle cx="2" cy="14" r="1.8" fill="#a00000"/><circle cx="14" cy="2" r="1.8" fill="#a00000"/></g>
<g transform="translate(1197.8,249)" shape-rendering="geometricPrecision"><path d="M1,2 H15 M1,14 H15" stroke="#404040" stroke-width="1.3"/><circle cx="2" cy="2" r="1.4" fill="#a00000"/><circle cx="14" cy="2" r="1.4" fill="#a00000"/><circle cx="2" cy="14" r="1.4" fill="#a00000"/><circle cx="14" cy="14" r="1.4" fill="#a00000"/><circle cx="8" cy="2" r="1.3" fill="#a00000"/><circle cx="8" cy="14" r="1.3" fill="#a00000"/><path d="M8,4 V10 M5,8 L8,11 L11,8" stroke="#0000e0" stroke-width="1.5" fill="none"/></g>
<g transform="translate(1220.6,249)" shape-rendering="geometricPrecision"><path d="M4,2 H12 L15.5,8 L12,14 H4 L0.5,8 Z" fill="#f0f0a0" stroke="#0000e0" stroke-width="1.2"/><path d="M4,12 L11,4 M7,13 L13,6" stroke="#e0e040"/></g>
<g transform="translate(1243.6,249)" shape-rendering="geometricPrecision"><ellipse cx="5" cy="5" rx="4" ry="3.5" fill="#fff" stroke="#000" stroke-width="1.1"/><circle cx="10" cy="11" r="3.5" fill="none" stroke="#000" stroke-width="1.1"/><path d="M9,1 L14,6 M14,3 V6 H11" stroke="#a00000" fill="none"/></g>
<g transform="translate(1266.2,249)" shape-rendering="geometricPrecision"><path d="M6,1 V12 M1,6 H11" stroke="#000" stroke-width="1.4"/><path d="M6,0 L4,2 H8 Z M0,6 L2,4 V8 Z M11,6 L9,4 V8 Z" fill="#000"/><circle cx="11" cy="12" r="3.3" fill="none" stroke="#000"/><path d="M9,1 L14,6" stroke="#a00000"/></g>
<g transform="translate(1290,249)" shape-rendering="geometricPrecision"><path d="M1,3 H15 M1,11 H15" stroke="#404040" stroke-dasharray="2,1"/><rect x="1" y="2" width="3" height="3" fill="#008000"/><rect x="12" y="2" width="3" height="3" fill="#008000"/><rect x="4" y="10" width="3" height="5" fill="#008000"/><path d="M8,5 V11" stroke="#000"/><path d="M12,16 L16,12 L16,16 Z" fill="#000"/></g>
<g transform="translate(1312.5,249)" shape-rendering="geometricPrecision"><path d="M8,1 L15,11 L8,15 L1,11 Z" fill="#f0f080" stroke="#000" stroke-width="1.1"/><path d="M8,1 V15" stroke="#000"/></g>
<g transform="translate(1335,249)" shape-rendering="geometricPrecision"><text x="0" y="7" font-size="8" font-weight="bold" fill="#0000e0">P</text><path d="M3,9 L12,5 L16,13 L9,16 Z" fill="#fff" stroke="#000" stroke-width="1.1"/><path d="M5,7 L14,12" stroke="#000"/><circle cx="13" cy="14" r="1.5" fill="#000"/></g>
<g transform="translate(1358.8,249)" shape-rendering="geometricPrecision"><rect x="1" y="1" width="14" height="14" fill="none" stroke="#a00000" stroke-dasharray="1.5,1" stroke-width="1.2"/><path d="M2,14 L10,6" stroke="#e00000" stroke-width="1.6"/><circle cx="11" cy="11" r="3" fill="#fff" stroke="#000"/><path d="M4,2 L8,6" stroke="#000"/></g>
<g transform="translate(1381.4,249)" shape-rendering="geometricPrecision"><rect x="1" y="1" width="14" height="14" fill="none" stroke="#a00000" stroke-dasharray="1.5,1" stroke-width="1.2"/><circle cx="5" cy="11" r="3" fill="#ffff60" stroke="#000"/><circle cx="5" cy="11" r="1" fill="#000"/><circle cx="11" cy="7" r="3" fill="#fff" stroke="#000"/><path d="M4,3 h6 v3" stroke="#000" fill="none"/></g>
<g transform="translate(1244.8,318)" shape-rendering="geometricPrecision"><ellipse cx="7" cy="12" rx="6" ry="3" fill="#fff" stroke="#000"/><path d="M4,4 Q7,0 10,4 L11,9 Q7,11 3,9 Z" fill="#e8e8e8" stroke="#000"/><path d="M2,7 H12" stroke="#000"/><path d="M12,16 L16,12 L16,16 Z" fill="#000"/></g>
<g transform="translate(1268.5,318)" shape-rendering="geometricPrecision"><path d="M1.5,1.5 H12.5 V4 H8.5 V11 H12.5 V14 H1.5 V11 H5.5 V4 H1.5 Z" fill="#fff" stroke="#000" stroke-width="1.2"/><path d="M12,16 L16,12 L16,16 Z" fill="#000"/></g>
<g transform="translate(1291.5,318)" shape-rendering="geometricPrecision"><path d="M1.5,1.5 H13 V5 H9.5 V14 H5.5 V5 H1.5 Z" fill="#fff" stroke="#000" stroke-width="1.2"/><path d="M12,16 L16,12 L16,16 Z" fill="#000"/></g>
<g transform="translate(1313.6,318)" shape-rendering="geometricPrecision"><path d="M2,1 Q0,5 2,8 Q0,11 2,15 M6,1 Q4,5 6,8 Q4,11 6,15 M10,1 Q8,5 10,8 Q8,11 10,15 M3,1 Q5,5 3,8 Q5,11 3,15 M7,1 Q9,5 7,8 Q9,11 7,15 M11,1 Q13,5 11,8 Q13,11 11,15" stroke="#404040" fill="none"/><path d="M12,16 L16,12 L16,16 Z" fill="#000"/></g>
<g transform="translate(1336.5,318)" shape-rendering="geometricPrecision"><text x="0" y="12" font-size="12" font-weight="bold" fill="#404040" textLength="11" lengthAdjust="spacingAndGlyphs">W</text><path d="M1,14 H12 M11,3 V14 L15,13" stroke="#000" stroke-width="1.3" fill="none"/><path d="M12,16 L16,12 L16,16 Z" fill="#000"/></g>
<g transform="translate(1359.4,318)" shape-rendering="geometricPrecision"><rect x="1.5" y="1.5" width="13" height="13" fill="#e0e0e0"/><path d="M1,3 H14 M1,6 H14 M1,11 H14 M1,14 H14" stroke="#20a0a0" stroke-width="1.4"/><path d="M1.5,0 V16" stroke="#000080" stroke-dasharray="1,1"/><circle cx="12" cy="8.5" r="1.6" fill="#909090"/><path d="M12,16 L16,12 L16,16 Z" fill="#000"/></g>
<g transform="translate(1383.1,318)" shape-rendering="geometricPrecision"><rect x="1" y="1" width="13" height="13" fill="#fff" stroke="#000" stroke-width="1.2"/><path d="M1,6 L6,1 M1,11 L11,1 M3,14 L14,3 M8,14 L14,8" stroke="#000" stroke-dasharray="1.5,1"/><path d="M12,16 L16,12 L16,16 Z" fill="#000"/></g>
<g transform="translate(1406,318)" shape-rendering="geometricPrecision"><path d="M2,15 V5 Q2,1 6,1 H14 V4 H6.5 Q5,4 5,5.5 V15 Z" fill="#fff" stroke="#000" stroke-width="1.2"/><path d="M12,16 L16,12 L16,16 Z" fill="#000"/></g>
<g transform="translate(1244.8,341)" shape-rendering="geometricPrecision"><path d="M1,14 V9 Q1,7 4,7 L9,5 Q12,4 12,1" fill="none" stroke="#000" stroke-width="1.8"/><path d="M12,16 L16,12 L16,16 Z" fill="#000"/></g>
<g transform="translate(1268.5,341)" shape-rendering="geometricPrecision"><path d="M1,12 H14 Q14,8 10,7 Q6,6 5,9 L1,12" fill="#fff" stroke="#000" stroke-width="1.2"/><path d="M6,10 h4" stroke="#000" stroke-dasharray="1,1"/><path d="M12,16 L16,12 L16,16 Z" fill="#000"/></g>
<g transform="translate(1291.5,341)" shape-rendering="geometricPrecision"><path d="M3,6 H13 Q16,8.5 13,11 H3 Q0,8.5 3,6 Z" fill="#a0a0a0" stroke="#000" stroke-width="1.1"/><path d="M3,8 H13 M3,9.5 H13" stroke="#fff" stroke-dasharray="1,1"/><path d="M12,16 L16,12 L16,16 Z" fill="#000"/></g>
<g transform="translate(1313.6,341)" shape-rendering="geometricPrecision"><path d="M4,6 H14 Q16,8.5 13,11 H1 Z" fill="#a0a0a0" stroke="#000" stroke-width="1.1"/><path d="M4,8 H13 M3,9.5 H13" stroke="#fff" stroke-dasharray="1,1"/><path d="M12,16 L16,12 L16,16 Z" fill="#000"/></g>
<g transform="translate(1336.5,341)" shape-rendering="geometricPrecision"><rect x="1.5" y="1.5" width="12" height="12" fill="#fff" stroke="#000" stroke-width="1.3"/><path d="M2,2 L13,13 M13,2 L2,13" stroke="#404040"/><path d="M12,16 L16,12 L16,16 Z" fill="#000"/></g>
<g transform="translate(1359.4,341)" shape-rendering="geometricPrecision"><path d="M2,3 Q5,8 2,13 M5,3 Q8,8 5,13 M8,3 Q11,8 8,13 M11,3 Q14,8 11,13" stroke="#404040" fill="none" stroke-width="1.1"/><path d="M12,16 L16,12 L16,16 Z" fill="#000"/></g>
<g transform="translate(1383.1,341)" shape-rendering="geometricPrecision"><path d="M3,1.5 H11 V4 H8.5 V12 L7,15 L5.5,12 V4 H3 Z" fill="#fff" stroke="#000" stroke-width="1.2"/><path d="M12,16 L16,12 L16,16 Z" fill="#000"/></g>
<g transform="translate(1406,341)" shape-rendering="geometricPrecision"><path d="M1,5 H14 M1,1 V9 M5,3 V7 M9,3 V7 M13,1 V9" stroke="#0000e0" stroke-width="1.3"/><path d="M1,8 H14" stroke="#0000e0" stroke-dasharray="1,1"/><path d="M1,13 Q4,11 7,13 Q10,15 13,13" stroke="#e000e0" stroke-width="1.4" fill="none"/><path d="M2,12 l1,2 M8,12 l1,2" stroke="#ff0" stroke-width="1.2"/><path d="M12,16 L16,12 L16,16 Z" fill="#000"/></g>
<g transform="translate(1310,882)" shape-rendering="geometricPrecision"><path d="M2,14 L6,6 L10,14 Z" fill="none" stroke="#2060c0" stroke-width="1.4"/><path d="M1,10 H11" stroke="#2060c0" stroke-width="1.2"/><circle cx="11" cy="5" r="3.5" fill="#ffff80" stroke="#c0a000"/></g>
<g transform="translate(1333,882)" shape-rendering="geometricPrecision"><path d="M2,14 L6,6 L10,14 Z" fill="none" stroke="#a0a0a0" stroke-width="1.4"/><path d="M1,10 H11 M8,12 L15,3" stroke="#a0a0a0" stroke-width="1.2"/></g>
<g transform="translate(1356,882)" shape-rendering="geometricPrecision"><path d="M9,8 V5 Q9,1 12,1 Q15,1 15,5 V7" fill="none" stroke="#202020" stroke-width="1.6"/><rect x="2" y="7" width="10" height="9" fill="#f0d020" stroke="#404000"/><path d="M2,10 h10 M2,13 h10" stroke="#a09000"/></g>
<g transform="translate(1377,882)" shape-rendering="geometricPrecision"><rect x="1" y="2" width="8" height="13" fill="#4060a0"/><path d="M3,4 v10 M6,4 v10" stroke="#fff"/><circle cx="12" cy="12" r="4" fill="#20a020"/><path d="M10,12 l1.5,1.5 l3,-3" stroke="#fff" stroke-width="1.2" fill="none"/></g>
</svg></body></html>
